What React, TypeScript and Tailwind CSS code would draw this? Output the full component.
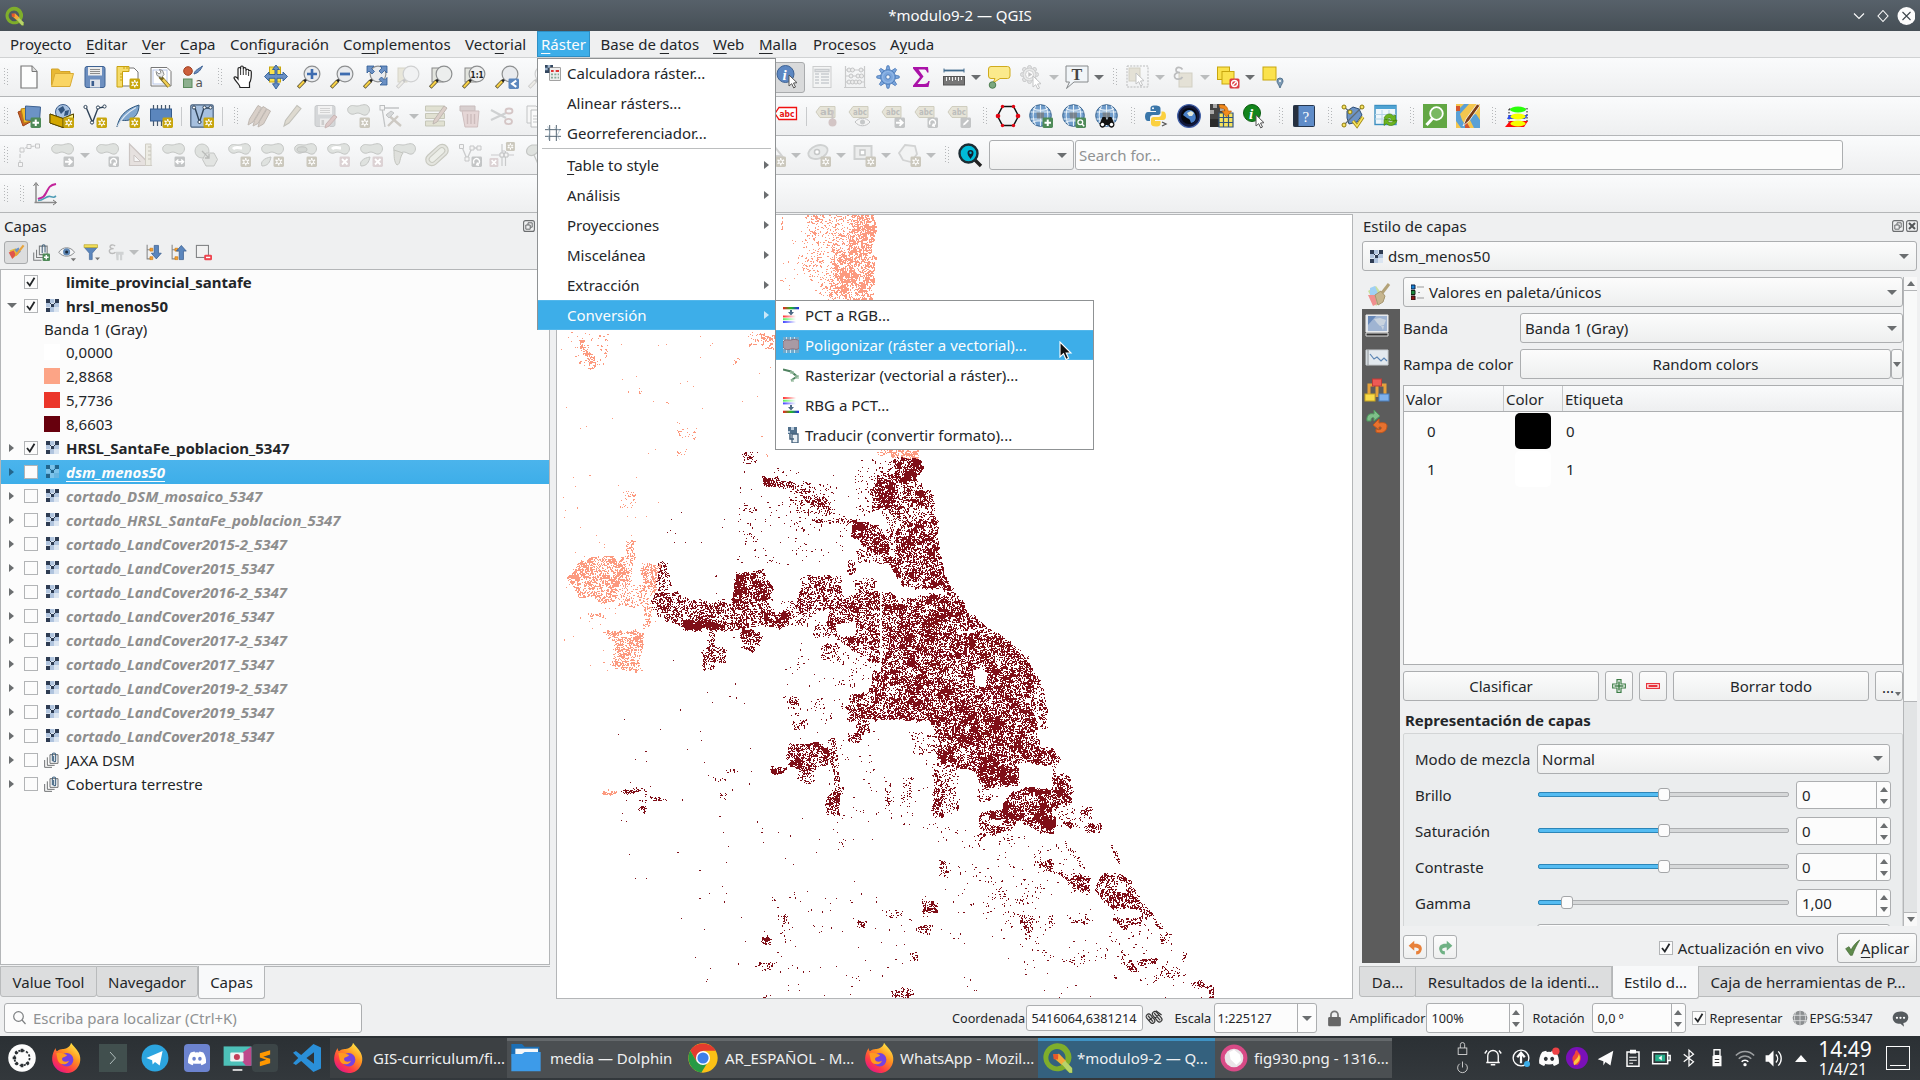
import React from "react";

type Kids = { children?: React.ReactNode };

/* ---------------------------------------------------------------- map raster */

type Pt = [number, number];
type Area = { c: "d" | "s" | "x"; k: number; p: Pt[] };

const hash = (x: number, y: number, s = 0) => {
  let h = (Math.imul(x, 374761393) + Math.imul(y, 668265263) + Math.imul(s, 974634777)) | 0;
  h = Math.imul(h ^ (h >>> 13), 1274126177);
  h ^= h >>> 16;
  return (h >>> 0) / 4294967296;
};

const smooth = (x: number, y: number, size: number, s: number) => {
  const gx = Math.floor(x / size);
  const gy = Math.floor(y / size);
  const fx = x / size - gx;
  const fy = y / size - gy;
  const a = hash(gx, gy, s) * (1 - fx) + hash(gx + 1, gy, s) * fx;
  const b = hash(gx, gy + 1, s) * (1 - fx) + hash(gx + 1, gy + 1, s) * fx;
  return a * (1 - fy) + b * fy;
};

const inside = (x: number, y: number, p: Pt[]) => {
  let r = false;
  for (let i = 0, j = p.length - 1; i < p.length; j = i++) {
    if (p[i][1] > y !== p[j][1] > y && x < ((p[j][0] - p[i][0]) * (y - p[i][1])) / (p[j][1] - p[i][1]) + p[i][0]) r = !r;
  }
  return r;
};

const tile = (ox: number, oy: number, sx: number, sy: number, rows: [Area["c"], number, number[]][]): Area[] =>
  rows.map(([c, k, n]) => {
    const q = n.length === 4 ? [n[0], n[1], n[2], n[1], n[2], n[3], n[0], n[3]] : n;
    const p: Pt[] = [];
    for (let i = 0; i < q.length; i += 2) p.push([ox + q[i] / sx, oy + q[i + 1] / sy]);
    return { c, k, p };
  });

const areas: Area[] = [
  ...tile(-17, -15, 2.8, 3, [
    ["s", 0.62, [870, 42, 938, 42, 932, 150, 930, 300, 845, 300, 825, 170, 870, 130]],
    ["s", 0.3, [830, 42, 870, 42, 870, 130, 825, 170, 845, 300, 800, 300, 815, 200]],
    ["s", 0.14, [740, 42, 830, 42, 820, 170, 810, 300, 800, 290, 750, 240, 720, 160]],
    ["s", 0.5, [755, 45, 795, 70]],
    ["s", 0.02, [662, 42, 760, 42, 830, 300, 662, 300]],
    ["s", 0.55, [610, 400, 658, 395, 658, 445, 615, 435]],
    ["s", 0.2, [580, 400, 610, 440]],
    ["s", 0.55, [108, 412, 130, 415, 160, 500, 140, 505, 115, 450]],
    ["s", 0.06, [90, 400, 190, 500]],
    ["s", 0.3, [540, 475, 555, 495]],
    ["s", 0.15, [380, 680, 440, 715]],
    ["s", 0.15, [380, 750, 412, 765]],
    ["s", 0.002, [60, 400, 650, 780]],
    ["s", 0.3, [268, 568, 285, 580]],
    ["s", 0.3, [350, 605, 358, 618]],
  ]),
  ...tile(-7, 225, 3, 3, [
    ["s", 0.7, [1012, 28, 1106, 30, 1106, 55, 1020, 52]],
    ["s", 0.35, [980, 30, 1012, 42]],
    ["s", 0.55, [50, 415, 80, 370, 130, 340, 190, 345, 200, 365, 230, 345, 232, 300, 260, 300, 250, 360, 235, 430, 200, 440, 190, 485, 150, 485, 100, 470, 60, 430]],
    ["s", 0.3, [190, 400, 325, 370, 315, 450, 295, 560, 270, 560, 280, 500, 200, 500]],
    ["s", 0.45, [275, 355, 325, 370, 310, 450, 270, 440]],
    ["s", 0.55, [155, 570, 180, 562, 240, 575, 285, 575, 285, 625, 265, 700, 165, 680, 195, 640, 175, 600]],
    ["s", 0.25, [112, 518, 160, 540]],
    ["s", 0.15, [212, 155, 256, 205]],
    ["s", 0.003, [30, 100, 320, 700]],
    ["x", 1, [245, 380, 270, 430]],
    ["x", 1, [215, 580, 240, 590]],
    ["d", 0.8, [1030, 55, 1108, 55, 1112, 120, 1040, 118]],
    ["d", 0.42, [970, 100, 1040, 100, 1115, 118, 1140, 190, 1120, 200, 1040, 200, 965, 215]],
    ["d", 0.6, [985, 120, 1030, 200]],
    ["d", 0.45, [1095, 150, 1150, 200]],
    ["d", 0.3, [1020, 200, 1155, 245]],
    ["d", 0.6, [1055, 240, 1158, 240, 1160, 330, 1185, 390, 1215, 462, 1060, 435, 1020, 370]],
    ["d", 0.2, [1000, 220, 1060, 330]],
    ["d", 0.08, [915, 60, 1030, 220]],
    ["d", 0.65, [635, 110, 685, 112, 680, 140, 645, 142]],
    ["d", 0.42, [680, 115, 740, 130, 760, 150, 820, 175, 850, 215, 830, 215, 740, 165, 680, 140]],
    ["d", 0.12, [740, 130, 850, 220]],
    ["d", 0.3, [780, 235, 930, 250]],
    ["d", 0.7, [905, 240, 960, 240, 1010, 290, 1015, 350, 960, 330, 935, 310, 910, 280]],
    ["d", 0.35, [920, 325, 1015, 365]],
    ["d", 0.65, [890, 362, 912, 400]],
    ["d", 0.2, [580, 190, 620, 212]],
    ["d", 0.25, [578, 35, 618, 72]],
    ["d", 0.012, [560, 90, 900, 380]],
    ["d", 0.4, [320, 365, 350, 365, 365, 450, 320, 450]],
    ["d", 0.52, [315, 455, 410, 465, 530, 490, 640, 470, 665, 512, 715, 520, 712, 555, 640, 560, 400, 570, 300, 515]],
    ["d", 0.6, [552, 398, 640, 395, 672, 440, 665, 490, 552, 485]],
    ["d", 0.85, [402, 541, 455, 570]],
    ["d", 0.6, [460, 546, 535, 568]],
    ["d", 0.6, [552, 402, 582, 460]],
    ["d", 0.6, [640, 515, 714, 556]],
    ["d", 0.65, [575, 560, 636, 590, 615, 630, 575, 630]],
    ["d", 0.5, [455, 625, 525, 622, 528, 665, 458, 668]],
    ["d", 0.45, [478, 572, 495, 625]],
    ["d", 0.3, [455, 668, 490, 690]],
    ["d", 0.45, [755, 415, 865, 410, 870, 490, 800, 510, 740, 530, 735, 490]],
    ["d", 0.25, [690, 485, 770, 555]],
    ["d", 0.58, [840, 500, 880, 480, 930, 450, 1000, 450, 1000, 670, 960, 660, 900, 620, 860, 600, 830, 540]],
    ["d", 0.4, [912, 415, 978, 450]],
    ["d", 0.3, [790, 535, 850, 590]],
    ["d", 0.35, [812, 610, 865, 660]],
    ["d", 0.55, [890, 760, 960, 755, 970, 690, 1005, 690, 1005, 842, 890, 842]],
    ["d", 0.64, [1000, 460, 1060, 470, 1215, 462, 1270, 530, 1310, 560, 1400, 620, 1440, 680, 1455, 750, 1455, 842, 1000, 842]],
    ["d", 0.3, [1400, 620, 1440, 680, 1480, 750, 1490, 842, 1470, 842, 1455, 740]],
    ["d", 0.02, [700, 640, 980, 840]],
    ["d", 0.25, [712, 768, 745, 795]],
    ["d", 0.3, [795, 770, 842, 780]],
    ["d", 0.002, [330, 200, 880, 840]],
    ["x", 1, [988, 425, 994, 670]],
    ["x", 1, [1270, 690, 1290, 685, 1312, 700, 1305, 740, 1275, 735]],
    ["x", 1, [855, 550, 915, 545, 915, 585, 860, 585]],
    ["x", 1, [1225, 575, 1310, 560, 1270, 575, 1215, 582]],
    ["x", 0.5, [1070, 680, 1110, 705]],
    ["x", 0.6, [1010, 735, 1045, 770]],
  ]),
  ...tile(-7, 485, 1.96, 3, [
    ["d", 0.66, [740, 60, 950, 60, 955, 110, 970, 150, 990, 175, 965, 195, 925, 195, 920, 250, 845, 262, 838, 215, 790, 200, 755, 175, 755, 80]],
    ["d", 0.4, [955, 20, 974, 20, 974, 85, 962, 88]],
    ["d", 0.55, [845, 225, 918, 225, 912, 256, 845, 260]],
    ["d", 0.4, [600, 60, 625, 100]],
    ["d", 0.5, [585, 100, 608, 130]],
    ["d", 0.2, [710, 90, 755, 170]],
    ["d", 0.62, [470, 125, 520, 125, 550, 150, 550, 180, 510, 205, 460, 205, 465, 160]],
    ["d", 0.6, [433, 200, 460, 220]],
    ["d", 0.35, [485, 190, 520, 245]],
    ["d", 0.4, [545, 115, 560, 115, 570, 270, 558, 300]],
    ["d", 0.65, [550, 265, 570, 270, 568, 348, 535, 345, 535, 315]],
    ["d", 0.3, [470, 0, 488, 18]],
    ["d", 0.25, [472, 55, 502, 90]],
    ["d", 0.45, [750, 190, 768, 190, 770, 355, 750, 345]],
    ["d", 0.25, [768, 190, 800, 200, 800, 330, 770, 340]],
    ["d", 0.3, [835, 262, 880, 290, 840, 310]],
    ["d", 0.6, [975, 190, 990, 215, 1018, 230, 1028, 310, 1000, 300, 985, 260]],
    ["d", 0.35, [960, 140, 985, 145, 995, 185, 980, 200]],
    ["d", 0.7, [878, 330, 895, 285, 925, 262, 1005, 268, 1028, 308, 985, 325, 985, 345, 995, 405, 970, 400, 935, 375, 915, 370, 880, 350]],
    ["d", 0.5, [838, 340, 878, 330, 915, 365, 900, 395, 845, 408]],
    ["x", 1, [862, 358, 885, 375]],
    ["x", 1, [845, 345, 860, 360]],
    ["d", 0.1, [990, 320, 1060, 380]],
    ["d", 0.5, [1038, 330, 1060, 350]],
    ["d", 0.5, [1050, 368, 1080, 398]],
    ["d", 0.6, [1010, 365, 1022, 380]],
    ["d", 0.3, [1092, 430, 1105, 432, 1118, 490, 1108, 490]],
    ["d", 0.25, [1000, 420, 1010, 420, 1055, 520, 1045, 520]],
    ["d", 0.55, [955, 480, 985, 478, 985, 515, 965, 510]],
    ["d", 0.5, [985, 510, 1005, 515, 1030, 550, 1018, 550]],
    ["d", 0.45, [1020, 525, 1055, 525, 1055, 580, 1030, 580]],
    ["d", 0.5, [1065, 575, 1085, 520, 1120, 515, 1150, 570, 1165, 605, 1180, 640, 1165, 655, 1150, 625, 1100, 622]],
    ["d", 0.5, [1090, 580, 1130, 578, 1160, 600, 1150, 622, 1100, 622]],
    ["x", 1, [1112, 545, 1128, 575]],
    ["d", 0.5, [1098, 655, 1165, 648, 1160, 665, 1120, 685]],
    ["d", 0.35, [1020, 655, 1065, 670]],
    ["d", 0.5, [1178, 640, 1205, 690, 1190, 688]],
    ["d", 0.3, [1195, 700, 1215, 730]],
    ["d", 0.7, [730, 603, 758, 640]],
    ["d", 0.45, [660, 630, 690, 650]],
    ["d", 0.45, [720, 673, 748, 703]],
    ["d", 0.3, [600, 660, 620, 682]],
    ["d", 0.6, [416, 710, 434, 730]],
    ["d", 0.25, [408, 785, 440, 810]],
    ["d", 0.3, [452, 645, 464, 700]],
    ["d", 0.5, [668, 868, 715, 862, 712, 885, 690, 896, 670, 896]],
    ["d", 0.3, [418, 884, 438, 896]],
    ["d", 0.35, [920, 640, 948, 645, 942, 720, 930, 715]],
    ["d", 0.25, [912, 592, 936, 612]],
    ["d", 0.45, [978, 645, 986, 675]],
    ["d", 0.6, [1120, 785, 1140, 780, 1155, 812, 1140, 815]],
    ["d", 0.65, [1150, 780, 1190, 770, 1185, 792, 1155, 792]],
    ["d", 0.3, [1118, 745, 1128, 790]],
    ["d", 0.25, [1195, 800, 1235, 838]],
    ["d", 0.35, [1240, 755, 1248, 785]],
    ["d", 0.5, [1255, 850, 1275, 838, 1290, 862, 1262, 862]],
    ["d", 0.45, [1285, 855, 1302, 855, 1305, 897, 1292, 897]],
    ["d", 0.55, [125, 272, 185, 262, 185, 275, 150, 282]],
    ["d", 0.6, [186, 288, 226, 291, 226, 300, 190, 298]],
    ["d", 0.3, [175, 300, 188, 338]],
    ["d", 0.4, [345, 203, 366, 218]],
    ["d", 0.35, [318, 234, 346, 239]],
    ["d", 0.35, [332, 280, 344, 296]],
    ["s", 0.75, [102, 272, 128, 285]],
    ["d", 0.35, [762, 480, 775, 525]],
    ["d", 0.35, [710, 755, 718, 780]],
    ["d", 0.12, [1000, 778, 1025, 788]],
    ["d", 0.2, [655, 240, 668, 320]],
    ["d", 0.12, [690, 225, 708, 320]],
    ["d", 0.012, [560, 100, 760, 100, 760, 380, 520, 470]],
    ["d", 0.012, [760, 380, 900, 400, 1000, 440, 1060, 580, 1180, 680, 1250, 840, 1200, 890, 820, 680, 740, 500]],
    ["d", 0.022, [840, 400, 930, 410, 1000, 600, 1000, 700, 880, 620]],
    ["d", 0.005, [410, 560, 820, 600, 1180, 780, 1290, 896, 420, 896]],
    ["d", 0.0012, [120, 40, 600, 100, 600, 860, 120, 860]],
  ]),
];

const MW = 795;
const MH = 784;

/* Pixels come in short horizontal or vertical runs rather than single dots. */
const grain = (x: number, y: number, n: number) =>
  hash(x, y, 7) < 0.5 ? hash(x >> 1, y, 40 + n) : hash(x, y >> 1, 340 + n);

const buildRaster = () => {
  const grid = new Uint8Array(MW * MH);
  areas.forEach((a, n) => {
    const xs = a.p.map((q) => q[0]);
    const ys = a.p.map((q) => q[1]);
    const x0 = Math.max(0, Math.floor(Math.min(...xs)) - 6);
    const x1 = Math.min(MW - 1, Math.ceil(Math.max(...xs)) + 6);
    const y0 = Math.max(0, Math.floor(Math.min(...ys)) - 6);
    const y1 = Math.min(MH - 1, Math.ceil(Math.max(...ys)) + 6);
    const small = Math.min(x1 - x0, y1 - y0) < 30;
    for (let y = y0; y <= y1; y++)
      for (let x = x0; x <= x1; x++) {
        const w1 = a.c === "x" ? 1.5 : 4;
        const w2 = a.c === "x" || small ? 0 : 7;
        const jx = (smooth(x, y, 3, 5) - 0.5) * w1 + (smooth(x, y, 11, 15) - 0.5) * w2;
        const jy = (smooth(x, y, 3, 6) - 0.5) * w1 + (smooth(x, y, 11, 16) - 0.5) * w2;
        if (!inside(x + jx, y + jy, a.p)) continue;
        if (a.c === "x") {
          if (hash(x, y, 90 + n) < a.k) grid[y * MW + x] = 0;
          continue;
        }
        const m =
          a.k < 0.05
            ? (smooth(x, y, 13, 13) > 0.6 ? 2.4 : 0.35) * (smooth(x, y, 3, 14) > 0.55 ? 2 : 0.4)
            : 0.1 + 0.8 * smooth(x, y, 3, 11) + 0.9 * smooth(x, y, 8, 12);
        if (grain(x, y, n) < a.k * m) grid[y * MW + x] = a.c === "d" ? 2 : 1;
      }
  });
  const out = ["", "", ""];
  for (let y = 0; y < MH; y++)
    for (let x = 0; x < MW; ) {
      const v = grid[y * MW + x];
      let e = x + 1;
      while (e < MW && grid[y * MW + e] === v) e++;
      if (v) out[v] += `M${x} ${y}h${e - x}v1h${x - e}z`;
      x = e;
    }
  return out;
};

const raster = buildRaster();

const MapCanvas = () => (
  <svg width={MW} height={MH} viewBox={`0 0 ${MW} ${MH}`} shapeRendering="crispEdges" className="block">
    <path d={raster[1]} fill="#fc9a7f" />
    <path d={raster[2]} fill="#7f0f18" />
  </svg>
);

/* --------------------------------------------------------------------- icons */

const Svg = ({ s = 24, children }: Kids & { s?: number }) => (
  <svg width={s} height={s} viewBox="0 0 24 24" fill="none" className="block shrink-0 overflow-visible">
    {children}
  </svg>
);

const Badge = ({ t = "star", off = false }: { t?: string; off?: boolean }) => {
  const fill = off ? (t === "star" ? "#cbc8bd" : t === "x" ? "#dcd2d4" : "#c3c5c6") : t === "plus" || t === "zoom" ? "#4e8a58" : t === "back" ? "#5b86bd" : "#c8a60e";
  return (
    <g>
      <rect x="13.5" y="13.5" width="10.5" height="10.5" rx="1.4" fill={fill} />
      {t === "star" && <path d="M18.75 15v7.5M15.5 16.9l6.5 3.8M22 16.9l-6.5 3.8" stroke="#fff" strokeWidth="1.3" />}
      {t === "star" && <circle cx="18.75" cy="18.75" r="1.9" stroke="#fff" strokeWidth="1" fill={fill} />}
      {t === "plus" && <path d="M18.75 15.5v6.5M15.5 18.75H22" stroke="#fff" strokeWidth="2" />}
      {t === "arrow" && <path d="M15 18.75h6M18.5 15.6l3.2 3.15-3.2 3.15" stroke="#fff" strokeWidth="1.9" />}
      {t === "both" && <path d="M15.2 18.75h7M17.4 16.4l-2.4 2.35 2.4 2.35M20.2 16.4l2.4 2.35-2.4 2.35" stroke="#fff" strokeWidth="1.4" />}
      {t === "x" && <path d="M16 16l5.5 5.5M21.5 16L16 21.5" stroke="#fff" strokeWidth="1.8" />}
      {t === "rot" && <path d="M16.2 20.5a3 3 0 1 1 3 1M19.6 19.4l-1 2.4 2.4.6" stroke="#fff" strokeWidth="1.4" />}
      {t === "pen" && <path d="M16 21.5l.6-2 4.2-4 1.2 1.3-4 4z" fill="#fff" />}
      {t === "back" && <path d="M21.3 15.6l-4.3 3.15 4.3 3.15" stroke="#fff" strokeWidth="2" />}
      {t === "zoom" && <path d="M20 20l2.2 2.2" stroke="#fff" strokeWidth="1.5" />}
      {t === "zoom" && <circle cx="18.3" cy="18.2" r="2.4" stroke="#fff" strokeWidth="1.3" />}
    </g>
  );
};

const Glass = ({ c = "#e9ebee", off = false }: { c?: string; off?: boolean }) => (
  <g>
    <path d="M1.2 22.6l6.6-6.9" stroke={off ? "#c9c9c9" : "#5b5334"} strokeWidth="3.6" />
    <path d="M1.8 22l5.4-5.7" stroke={off ? "#ecebe6" : "#f8d247"} strokeWidth="2.1" />
    <path d="M7.3 16.4l2.4-2.6" stroke={off ? "#c5c5c5" : "#222"} strokeWidth="2.6" />
    <circle cx="15" cy="9" r="7.9" fill={c} stroke={off ? "#cfd0d1" : "#8d8f90"} strokeWidth="1.2" />
  </g>
);

const blob = "M2 4c3-4 6-2 9-2s8-3 11 0 1 8-2 9-5-2-8-2-4 2-7 1-4-4-3-6z";
const Blob = ({ b, x }: { b?: string; x?: React.ReactNode }) => (
  <Svg>
    <path d={blob} fill="#dfe2df" stroke="#c4c6c4" strokeWidth="1" />
    {x}
    {b && <Badge t={b} off />}
  </Svg>
);

const Tag = ({ b, x, txt = "abc" }: { b?: string; x?: React.ReactNode; txt?: string }) => (
  <Svg>
    <path d="M1 8l4-5.500h15v11H5z" fill="#e6e4d8" stroke="#cfcdbf" />
    <text x="5" y="11.2" fontSize="9" fontFamily="DejaVu Sans" fontWeight="700" fill="#bcbdbc" textLength="14" lengthAdjust="spacingAndGlyphs">
      {txt}
    </text>
    {x}
    {b && <Badge t={b} off />}
  </Svg>
);

const Globe = ({ children }: Kids) => (
  <Svg>
    <circle cx="11.5" cy="11.5" r="10.8" fill="#6f9ccb" stroke="#39648f" />
    <path d="M1.5 8h20M1.5 15h20M3.5 18.5C6 16 17 16 19.5 18.5M4 4.5c3 2.3 12 2.3 15 0M11.5 1v21M6.5 2c-3 6-3 13 0 19M16.5 2c3 6 3 13 0 19" stroke="#e6f0f8" strokeWidth="1.1" />
    <path d="M7.5 8.5H15v6H8z" fill="#777c80" opacity=".8" />
    {children}
  </Svg>
);

const Floppy = ({ off = false }: { off?: boolean }) => (
  <g>
    <rect x="2" y="1.5" width="20" height="21" rx="2" fill={off ? "#d2d4d6" : "#6d8fc0"} stroke={off ? "#c3c5c7" : "#3e6293"} />
    <rect x="5" y="2" width="14" height="8.5" fill={off ? "#f2f2f2" : "#ececec"} />
    <path d="M7 4.5h10M7 6.5h10M7 8.5h10" stroke={off ? "#d0d0d0" : "#8d8d8d"} />
    <rect x="7" y="14.5" width="10" height="8" fill={off ? "#ececec" : "#dfe3ea"} />
    <rect x="8.5" y="16" width="2.6" height="5" fill={off ? "#c9c9c9" : "#3c5e8e"} />
  </g>
);

const Firefox = ({ s = 32 }: { s?: number }) => (
  <Svg s={s}>
    <defs>
      <linearGradient id="ffx" x1="20" y1="2" x2="5" y2="22" gradientUnits="userSpaceOnUse">
        <stop stopColor="#fff04a" />
        <stop offset=".4" stopColor="#ff9320" />
        <stop offset=".75" stopColor="#ff3b45" />
        <stop offset="1" stopColor="#e3168a" />
      </linearGradient>
    </defs>
    <path d="M15 .5c1.5 2.5 4 4 5.800 7.500 2.5 5 .8 10.5-3 13.300C13 24.800 6.500 23.500 3 19-.3 14.500.5 9 3.500 4.500c0 1.500.5 2 1 2.500C6 5.500 8 5 9.500 5.200c2-.3 5-1.500 5.500-4.700z" fill="url(#ffx)" />
    <circle cx="11.8" cy="13.3" r="5" fill="#7542e0" />
    <path d="M4 8.500c3-1 5.500.3 8 1.200-.5 1.600-3.200 1.300-3.700 2.800-.3 2 2.700 3 5.200 1.500-1.500 4-7.500 3.500-8.500-.5z" fill="#ff9a1f" />
  </Svg>
);

const QLogo = ({ s = 24 }: { s?: number }) => (
  <Svg s={s}>
    <path d="M12 1a10.500 10.500 0 1 0 6 19.300l3.500 3h2v-3.500l-2.500-2.500A10.500 10.500 0 0 0 12 1zm0 4.300a6.500 6.500 0 0 1 6 8.700l-4-3.700-3 3 4.500 4A6.500 6.500 0 1 1 12 5.300z" fill="#7fae2b" />
    <path d="M9.500 9.500l4-.6 5.500 5.600-3 3-5.600-5z" fill="#f4a83a" />
    <path d="M9 9l4 .2-.3 4L9.500 13z" fill="#e8572a" />
    <path d="M15.500 16.500l2.500-2.500 5.300 5.500v3.500h-2z" fill="#b9d36a" />
  </Svg>
);

const RasterIcon = ({ dim = false }: { dim?: boolean }) => (
  <svg width="13" height="13" viewBox="0 0 13 13" shapeRendering="crispEdges" className="block shrink-0">
    <rect width="13" height="13" fill={dim ? "#66b4e0" : "#dbe5f1"} />
    <path d="M4 0h4v4H4zM0 4h4v4H0zM4 8h4v5H4zM8 4h5v4H8z" fill={dim ? "#7cc3ea" : "#b0c4de"} />
    <path d="M0 0h4v4H0zM9 0h4v4H9zM5 5h3v3H5zM0 9h4v4H0zM8 4h1v1H8zM4 4h1v1H4z" fill={dim ? "#23658c" : "#2e3c53"} />
  </svg>
);

const GroupIcon = () => (
  <Svg s={16}>
    <path d="M9 4h12v13H9zM5 8v12h11M1 12v11h11" stroke="#6e7072" strokeWidth="1.5" />
    <path d="M12.5 14V4a2.500 2.500 0 0 1 5 0v9a1.500 1.500 0 0 1-3 0V6" stroke="#3b5f7d" strokeWidth="1.6" />
  </Svg>
);

const arrowCursor = (x: number, y: number, off = false) => (
  <path d={`M${x} ${y}v11l2.700-2.300 2 4.200 1.800-.9-2-4 3.500-.3z`} fill="#fff" stroke={off ? "#c3c4c5" : "#555"} strokeWidth="1" />
);

const Node = ({ pts, c }: { pts: Pt[]; c: string }) => (
  <g>
    {pts.map(([x, y], i) => (
      <circle key={i} cx={x} cy={y} r="1.6" fill="#fff" stroke={c} strokeWidth="1" />
    ))}
  </g>
);

const icons: Record<string, React.ReactNode> = {
  doc: <Svg><path d="M4 1h11l5 5.500V23H4z" fill="#fdfdfd" stroke="#777" strokeWidth="1.2" /><path d="M15 1v5.500h5" fill="#ddd" stroke="#777" /></Svg>,
  folder: <Svg><path d="M1.500 20V4h7l2 2.500h9.500V9" fill="#e9b935" stroke="#d2a32a" /><path d="M1.500 21.500L5 8.500h18.500L20 21.500z" fill="#fad564" stroke="#d9ab35" /></Svg>,
  save: <Svg><Floppy /></Svg>,
  layout: <Svg><path d="M3 3h15l4 4v14H3z" fill="#fff" stroke="#777" /><path d="M1 1.500h12v5H6.500V22H1z" fill="#f6dc6a" stroke="#c8a10f" /><path d="M4 9h2M4 12h2M4 15h2M8 2v2M11 2v2" stroke="#c8a10f" /><Badge /></Svg>,
  layoutmgr: <Svg><path d="M2 2.500h16l4 4V21H2z" fill="#fff" stroke="#777" /><rect x="4" y="5" width="14" height="14" stroke="#b9c8ea" /><path d="M11 11.500l9 10" stroke="#7a6a22" strokeWidth="4" /><path d="M14 14.500l6 7" stroke="#f2cf57" strokeWidth="2.5" /><path d="M7 6.500l1 4 4.500 2 2.500-3-1.500-4-3-1 1.500 3-2 1.500z" fill="#e9eaea" stroke="#8b8d8e" /></Svg>,
  style: <Svg><circle cx="6" cy="6" r="4.3" fill="#cc5f3c" stroke="#a03f20" /><path d="M12 9c1-4 3-4 8.500-8-2 4-3.500 6.500-8.500 8z" fill="#6d8fc0" stroke="#3e6293" /><rect x="1.5" y="14" width="8.5" height="8.5" fill="#8db08f" stroke="#5b8a5d" /><text x="13.5" y="22" fontSize="12" fontFamily="DejaVu Sans" fill="#555">a</text></Svg>,
  hand: <Svg><path d="M8 22.500c0-3-4.500-6-6-9.500 0-2 2.500-1.500 4 .8V4c0-2 2.600-2 2.600 0V2.500c0-2 2.700-2 2.700 0V4c0-2 2.700-1.800 2.700 0v1.500c.2-1.800 2.800-1.600 2.800.3 1-.8 2.500-.3 2.500 1.200 0 5 .3 8-1.800 10.500v5z" fill="#fff" stroke="#222" strokeWidth="1.2" transform="translate(1)" /><path d="M9.600 4v6M12.300 4v6M15 5v5M17.600 7v4" stroke="#333" /></Svg>,
  pan: <Svg><rect x="5.5" y="2" width="11" height="15" fill="#fbe24d" stroke="#c8a60e" /><path d="M12 0l3.500 4.500H13v5h6V7l4.500 4.500L19 16v-2.700h-6v5.500h2.500L12 24l-3.500-5.200H11v-5.500H5V16L.5 11.500 5 7v2.500h6v-5H8.500z" fill="#6a90c4" stroke="#2f5c96" strokeWidth=".9" /></Svg>,
  zin: <Svg><Glass /><path d="M15 4v10M10 9h10" stroke="#3d6cb0" strokeWidth="2.6" /></Svg>,
  zout: <Svg><Glass /><path d="M10 9h10" stroke="#3d6cb0" strokeWidth="2.8" /></Svg>,
  zfull: <Svg><Glass /><path d="M4 1h7L8.500 3.500l3 3-2.500 2.500-3-3L4 8zM24 1v7l-2.500-2.500-3 3L16 6l3-3-2-2zM24 20h-7l2.500-2.500-3.500-3 2.500-2.500 3 3 2.500-2.500z" fill="#6a90c4" stroke="#2f5c96" strokeWidth=".8" /></Svg>,
  zsel: <Svg><rect x="2" y="3" width="9" height="14" fill="#e8e6da" stroke="#d5d3c8" /><Glass off c="#f1f2f3" /></Svg>,
  zlayer: <Svg><rect x="3" y="3" width="11" height="14" fill="#e2e4de" stroke="#888" /><Glass c="#eceeed" /></Svg>,
  z11: <Svg><rect x="3" y="3" width="11" height="14" fill="#e2e4de" stroke="#888" /><Glass c="#eeefef" /><text x="8.6" y="12.5" fontSize="9.5" fontFamily="DejaVu Sans" fontWeight="700" fill="#222" textLength="13" lengthAdjust="spacingAndGlyphs">1:1</text></Svg>,
  zlast: <Svg><Glass /><Badge t="back" /></Svg>,
  znext: <Svg><Glass off c="#f4f5f6" /></Svg>,
  ident: <Svg><circle cx="8.5" cy="9" r="8.5" fill="#5c87c2" stroke="#3e6293" /><text x="5.5" y="14.5" fontSize="15" fontStyle="italic" fontWeight="700" fontFamily="Liberation Serif" fill="#fff">i</text>{arrowCursor(12, 10)}</Svg>,
  table: <Svg><rect x="3" y="1.5" width="18" height="21" fill="#f3f4f4" stroke="#cccdce" /><path d="M5 4.500h14v2H5zM5 9h4M11 9h8M5 12h4M11 12h8M5 15h4M11 15h8M5 18h4M11 18h8" stroke="#c9cccf" strokeWidth="1.3" /></Svg>,
  abacus: <Svg><path d="M2.500 1v21M21.500 1v21M2.500 5h19M2.500 11h19M2.500 17h19M1 22.500h22" stroke="#c9cacb" strokeWidth="1.2" />{[[6, 5], [9.5, 5], [18, 5], [8, 11], [15, 11], [18.5, 11], [6, 17], [9.5, 17], [13, 17], [16.5, 17]].map(([x, y], i) => <circle key={i} cx={x} cy={y} r="2" fill="#ededed" stroke="#c4c5c6" />)}</Svg>,
  gear: <Svg>{[0, 45, 90, 135, 180, 225, 270, 315].map((a) => <path key={a} d="M10 5.500L11 .8h2l1 4.700z" fill="#7ba6dd" stroke="#4b7ab8" strokeWidth=".8" transform={`rotate(${a} 12 12)`} />)}<circle cx="12" cy="12" r="7.3" fill="#7ba6dd" stroke="#4b7ab8" strokeWidth=".9" /><circle cx="12" cy="12" r="5.5" stroke="#93b8e6" strokeWidth="1.2" /><circle cx="12" cy="12" r="2.2" fill="#f4f6f8" stroke="#4b7ab8" /></Svg>,
  sigma: <Svg><path d="M4 2h15l.6 5.500h-1.500C17.500 5 16.500 4.500 14 4.500H9.500l5 7-6 7.500h6.500c2.500 0 3.500-.8 4.300-3h1.400L19.500 22H4v-1.500l7-8.500-7-8.500z" fill="#aa12a8" /></Svg>,
  measure: <Svg><path d="M2 5.500h20" stroke="#406a8c" strokeWidth="1.8" /><path d="M2 3.500v4M22 3.500v4" stroke="#406a8c" /><rect x="1.5" y="11.5" width="21" height="8.5" fill="#777" stroke="#555" /><path d="M4.500 12v4M7.500 12v3M10.500 12v4M13.500 12v3M16.500 12v4M19.500 12v3" stroke="#f2f2f2" /></Svg>,
  tip: <Svg><path d="M4 1.500h16.500a2.500 2.500 0 0 1 2.500 2.500v7a2.500 2.500 0 0 1-2.500 2.500H13L6 18l2-4.500H4A2.500 2.500 0 0 1 1.500 11V4A2.500 2.500 0 0 1 4 1.500z" fill="#fbea8c" stroke="#d0ab1d" /><circle cx="5.5" cy="20" r="3.3" fill="#7ca77e" stroke="#4f7f52" /></Svg>,
  action: <Svg>{[0, 45, 90, 135, 180, 225, 270, 315].map((a) => <circle key={a} cx="9.5" cy="2.5" r="2" fill="#e4e5e5" stroke="#cbcccd" transform={`rotate(${a} 9.5 9.5)`} />)}<circle cx="9.5" cy="9.5" r="6.5" fill="#e8e9e9" stroke="#cdcecf" /><circle cx="9.5" cy="9.5" r="4" fill="#fafafa" stroke="#cdcecf" /><path d="M8.300 7l4 2.500-4 2.500z" fill="#c2c3c4" />{arrowCursor(13, 11, true)}</Svg>,
  text: <Svg><path d="M1 1h22v16H9l-7.500 6.500L4.500 17H1z" fill="#f1f5f8" stroke="#86898b" /><text x="6.5" y="14.5" fontSize="16" fontWeight="700" fontFamily="Liberation Serif" fill="#444">T</text></Svg>,
  sel: <Svg><rect x="1" y="1" width="21" height="21" stroke="#b9babb" strokeDasharray="2 1.2" /><rect x="3" y="3" width="11" height="13" fill="#e4e1d6" stroke="#d2cfc3" />{arrowCursor(10, 8, true)}</Svg>,
  selex: <Svg><rect x="8" y="8" width="13" height="14" fill="#e4e1d6" stroke="#d2cfc3" /><path d="M11.500 4.500C10 1.500 5 1.500 5 5c0 2 2 2.500 4 2.500C5.500 7.500 3 9 3.500 11.500 4 15 10 15 11.500 12" stroke="#bcbdbe" strokeWidth="1.7" /></Svg>,
  desel: <Svg><rect x="1.5" y="2" width="12" height="12.5" fill="#fbe24d" stroke="#c8a60e" /><rect x="6" y="6.5" width="12" height="12.5" fill="#fbe24d" stroke="#c8a60e" /><rect x="13.5" y="13.5" width="10" height="10" rx="1.5" fill="#dc3b41" /><circle cx="18.5" cy="18.5" r="3" stroke="#fff" strokeWidth="1.3" /><path d="M20.500 16.500l-4 4" stroke="#fff" strokeWidth="1.3" /></Svg>,
  selloc: <Svg><rect x="2" y="2" width="13" height="13" fill="#fbe24d" stroke="#c8a60e" /><path d="M19 23c-1.500-4-3-5-3-7a3 3 0 0 1 6 0c0 2-1.500 3-3 7z" fill="#7d9bb5" stroke="#55748f" /><circle cx="19" cy="16" r="1" fill="#fff" /></Svg>,
  addlayer: <Svg><path d="M1 8l10-4 4 13-9 5z" fill="#c8622a" stroke="#9c4213" /><path d="M4 5l11-2 2 13-10 3z" fill="#f2b92c" stroke="#b78410" /><path d="M8.500 2l15 1-1 14-14-1z" fill="#6c93c6" stroke="#3e6293" /><Badge t="plus" /></Svg>,
  geopkg: <Svg><circle cx="13" cy="8" r="7.5" fill="#a9c3e2" stroke="#3e5f8c" /><path d="M8 5l5-3 2 4-4 4zM15 7l4-1-1 5-4 1z" fill="#32557f" /><path d="M0 10l13 4.500L23.500 10v9L13 23.500 0 19z" fill="#f3d400" stroke="#5b4a00" /><path d="M13 14.500L23.500 10v9L13 23.500z" fill="#fff58a" stroke="#5b4a00" /><path d="M0 10l13 4.500v9L0 19z" fill="#d3a700" stroke="#5b4a00" /><Badge /></Svg>,
  shp: <Svg><path d="M3 3l6.500 15.500L15 4l6-1" stroke="#2f4358" strokeWidth="1.4" /><Node pts={[[2.5, 3], [9, 18.5], [15, 3.5], [21.5, 2.5]]} c="#2f4358" /><Badge /></Svg>,
  feather: <Svg><path d="M1 23C3 14 7 6 23 1c0 7-3 13-10 15-3 .8-6 .5-8 0z" fill="#7fa6cf" stroke="#32597f" /><path d="M1.500 22.500C6 13 12 8 20 3.500" stroke="#dfe9f3" strokeWidth="1.2" /><Badge /></Svg>,
  chip: <Svg><path d="M4.500 1v21M8.500 1v21M12.500 1v21M16.500 1v21M20.500 1v21" stroke="#45586c" strokeWidth="1.2" /><rect x="1.5" y="5" width="21" height="12" fill="#5b86bd" stroke="#365d8e" /><Badge /></Svg>,
  virt: <Svg><rect x=".8" y=".8" width="22.4" height="22.4" rx="1.5" fill="#a6c0df" stroke="#49627f" strokeWidth="1.2" /><path d="M5 4l4.500 14L14 4l7 0" stroke="#2f4358" strokeWidth="1.4" /><Node pts={[[4, 3.5], [9.5, 18], [14.5, 3.5], [20.5, 3.5]]} c="#2f4358" /><Badge /></Svg>,
  pencils: <Svg><path d="M1 21l1.500-6L11 1.500l3.500 2L6 18zM6 22l1.500-5.500L16 2.500l3.500 2L11 19.500zM11 23l1.500-5.500L20 5l3.500 2-7 13z" fill="#d8cfc8" stroke="#bfb8b2" /></Svg>,
  pencil: <Svg><path d="M4 22l1.500-5.500L17 1.500l4 3L9 19z" fill="#dedad0" stroke="#c2c1ba" strokeWidth="1.1" /></Svg>,
  saveedit: <Svg><g opacity=".9"><Floppy off /></g><path d="M12 24l1-4 8-9 3 2-8 9z" fill="#ddc9c8" stroke="#c9b6b5" /></Svg>,
  addpoly: <Blob b="star" />,
  vertex: <Svg><path d="M3 4h17M3 4l3 19" stroke="#c2c4c5" strokeWidth="1.3" /><rect x="1" y="1.5" width="4.5" height="4.5" fill="#f5f5f5" stroke="#bcbebf" /><path d="M9 22l10-10M8 10l14 12" stroke="#cdc9c3" strokeWidth="2.4" /><path d="M7 11l5-4 3 2-5 5z" fill="#d6d8d9" stroke="#c2c4c5" /></Svg>,
  multi: <Svg><path d="M1.500 2h19v5h-19zM1.500 9.500h19v5h-19zM1.500 17h19v5h-19z" fill="#e1e1d2" stroke="#c6c7b9" /><path d="M9 20l1-4L20 2l3 2-10 14z" fill="#dccfc9" stroke="#bfb7b1" /></Svg>,
  trash: <Svg><path d="M3 2h15v5H3z" fill="#d8cfcf" stroke="#c7bcbc" /><path d="M5 7h17l-1.500 16H8z" fill="#e5d6d6" stroke="#cfbfbf" /><path d="M10.500 10v10M14 10v10M17.500 10v10" stroke="#cdbcbc" strokeWidth="1.4" /></Svg>,
  cut: <Svg><path d="M1 6l15 8M1 16l15-7" stroke="#cfd1d2" strokeWidth="2.2" /><ellipse cx="19" cy="7" rx="3.5" ry="2.5" stroke="#d5c6c6" strokeWidth="1.8" /><ellipse cx="18.5" cy="17.5" rx="3.5" ry="2.6" stroke="#d5c6c6" strokeWidth="1.8" /></Svg>,
  copy: <Svg><path d="M4 2h9l4 4v13H4z" fill="#f7f7f7" stroke="#c2c4c5" /><path d="M8 6h8l4 4v13H8z" fill="#fbfbfb" stroke="#bcbebf" /><path d="M10 12h7M10 15h7M10 18h7" stroke="#c5c7c8" /></Svg>,
  redabc: <Svg><path d="M1 9.500l4-6h17.500v12H5z" fill="#fff" stroke="#f01010" strokeWidth="1.3" /><text x="5.5" y="13" fontSize="9.5" fontFamily="DejaVu Sans" fontWeight="700" fill="#e81414" textLength="15" lengthAdjust="spacingAndGlyphs">abc</text></Svg>,
  tagpin: <Tag txt="ab" x={<g><path d="M17.500 6v11" stroke="#cbc5c5" strokeWidth="2" /><circle cx="17.5" cy="18.5" r="4" fill="#d3c5c5" /></g>} />,
  tageye: <Tag x={<g><path d="M7 18c4-5 11-5 15 0-4 5-11 5-15 0z" fill="#f4f4f4" stroke="#c0c1c2" /><circle cx="14.5" cy="18" r="2.5" fill="#c6c8c9" /></g>} />,
  tagmove: <Tag b="arrow" />,
  tagrot: <Tag b="rot" />,
  tagpen: <Tag b="pen" />,
  hex: <Svg><path d="M6.500 2.500h11L22.500 12l-5 9.500h-11L1.500 12z" stroke="#111" strokeWidth="1.5" /><g fill="#e30613"><circle cx="6.5" cy="2.5" r="1.7" /><circle cx="17.5" cy="2.5" r="1.7" /><circle cx="6.5" cy="21.5" r="1.7" /><circle cx="17.5" cy="21.5" r="1.7" /><circle cx="2" cy="12" r="2.3" /><circle cx="22" cy="12" r="2.3" /></g></Svg>,
  globeplus: <Globe><Badge t="plus" /></Globe>,
  globezoom: <Globe><Badge t="zoom" /></Globe>,
  binoc: <Globe><path d="M5 19l2.500-6h3l1 2.500h1l1-2.500h3l2.500 6a3 3 0 1 1-5.500 2h-3a3 3 0 1 1-5.500-2z" fill="#111" /><circle cx="7.5" cy="20.5" r="1.7" fill="#fff" /><circle cx="16.5" cy="20.5" r="1.7" fill="#fff" /></Globe>,
  python: <Svg><path d="M11 1.500c-4 0-4.500 1.500-4.500 3V7H12v1H4c-2 0-3 2-3 4.500S2 17 4 17h2v-3c0-2 1.500-3 3-3h5c1.500 0 2.500-1 2.500-2.500v-4c0-2-1.500-3-5.500-3z" fill="#3a76a9" /><path d="M12 22.500c4 0 4.500-1.500 4.500-3V17H11v-1h8c2 0 3-1.500 3-4s-1-4.500-3-4.500h-1.500V10c0 2-1.500 3-3 3h-5C8 13 7 14 7 15.500v4c0 2 1.500 3 5 3z" fill="#fbd03f" /><circle cx="9" cy="4.3" r="1" fill="#fff" /><path d="M18 18l4 2-4 2" stroke="#555" strokeWidth="1.3" /></Svg>,
  earth: <Svg><circle cx="12" cy="12" r="11.3" fill="#10183c" stroke="#3f5ea6" strokeWidth="1.3" /><circle cx="12" cy="12" r="8" fill="#06080f" /><path d="M6 11c3-7 10-6 12-1s0 8-4 9c-1-3-1-4-4-5z" fill="#4a80c8" /><path d="M10 9l4-2 3 2-2 3-3 0z" fill="#e3e8d8" /></Svg>,
  rast: <Svg><path d="M0 0h15v15H0z" fill="#444" /><path d="M3 0h4v4H3zM10 3h4v4h-4zM0 6h4v4H0z" fill="#aaa" /><path d="M0 15h11v8H0z" fill="#2b2b2b" /><path d="M9 9h14v14H9z" fill="#f6e25d" /><path d="M9 9h14v14H9zM13.500 9v14M18.500 9v14M9 13.500h14M9 18.500h14" stroke="#33557d" strokeWidth="1.2" /><path d="M9 1c6-1 9 2 9 6h3.500L16.500 13 12 7h3c0-2-2-3-5-3z" fill="#f08a1d" stroke="#c0620b" strokeWidth=".7" /></Svg>,
  info: <Svg><circle cx="9" cy="9" r="8.5" fill="#12851c" stroke="#0b5d12" /><text x="6" y="14.5" fontSize="15" fontStyle="italic" fontWeight="700" fontFamily="Liberation Serif" fill="#fff">i</text>{arrowCursor(13, 11)}</Svg>,
  book: <Svg><rect x="1.5" y="1.5" width="21" height="21" rx="1" fill="#5f8cc8" stroke="#26364d" /><rect x="1.5" y="1.5" width="5" height="21" fill="#27303f" /><text x="10.5" y="17.5" fontSize="15" fontFamily="Liberation Serif" fill="#fff">?</text></Svg>,
  topo: <Svg><path d="M6 7l6-4 6 2 3 6-5 7-8 2-2-6z" fill="#6c93c6" stroke="#2f4f77" /><path d="M3 21L21 3M3 3l6 5" stroke="#5f6a72" strokeWidth="1.2" /><g fill="#f7e463" stroke="#8e7a0d"><circle cx="3" cy="3" r="2" /><circle cx="21" cy="3" r="2" /><circle cx="9" cy="8" r="2" /><circle cx="3" cy="21" r="2" /></g><path d="M12 17l4 5 6-9" stroke="#a58d12" strokeWidth="3.2" /><path d="M12 17l4 5 6-9" stroke="#f7e463" strokeWidth="1.5" /></Svg>,
  reload: <Svg><rect x="1" y="1.5" width="21" height="19" fill="#eef6fb" stroke="#3c8fc0" strokeWidth="1.4" /><path d="M1 2h21v3H1z" fill="#4fa3d3" /><path d="M1 10.500h21M1 15h21M8 6v14M15 6v14" stroke="#b4d3e6" /><path d="M10 14c2-5 8-5 9-2l2.500-1v6h-6l2-2c-1.500-2-4-1-5 1zM23 16c-1 6-8 7-10.500 3.500L10 21.500v-6h6l-2 2c2 2 5 1 5.500-1z" fill="#6cb51f" stroke="#3e7c08" strokeWidth=".6" /></Svg>,
  green: <Svg><rect width="24" height="24" fill="#62a744" /><circle cx="13.5" cy="9.5" r="6.3" fill="#79b862" stroke="#fff" strokeWidth="1.8" /><path d="M9.500 14.500L3.500 21" stroke="#fff" strokeWidth="3" /></Svg>,
  osm: <Svg><rect width="24" height="24" fill="#f4c64e" /><path d="M0 8l8-8h5L4 10l2 6 5 8H5L0 17z" fill="#5aa0d6" /><path d="M12 12l8-2 4 6v8h-6z" fill="#5aa0d6" /><path d="M0 2h4v5H0zM9 15l5 9H9z" fill="#d5562f" /><path d="M7 22l3-7L21 0l3 1.500L13 17z" fill="#7c3d18" stroke="#fff" strokeWidth=".8" /></Svg>,
  stack: <Svg><path d="M4 5h18M4 5v14M22 4v15" stroke="#111" strokeDasharray="1.5 1.5" /><path d="M5 17h18l-4 6H0z" fill="#fe0a0a" /><ellipse cx="13" cy="19.5" rx="7.5" ry="3" fill="#f6ff00" /><path d="M4 11h19l-3 4H2z" fill="#2a49f0" /><ellipse cx="13" cy="12.5" rx="7.5" ry="3" fill="#f6ff00" /><ellipse cx="13" cy="5.5" rx="8" ry="3" fill="#2aff0a" /></Svg>,
  curve: <Svg><path d="M3 21V13C3 7 8 3 21 3" stroke="#cfd0d1" strokeWidth="1.4" strokeDasharray="4 2" /><path d="M1.500 19.500h4v4h-4zM3 5h4v4H3zM10 1.500h4v4h-4zM18.500 1h4v4h-4z" fill="#f5f5f5" stroke="#c6c7c8" /></Svg>,
  bmove: <Blob b="arrow" />,
  brot: <Blob b="rot" />,
  ruler: <Svg><path d="M1.500 1v21.500H23z" fill="#e6e1df" stroke="#cbc5c3" strokeWidth="1.2" /><path d="M6 12v6.500h6.500z" fill="#f6f6f6" stroke="#cbc5c3" /><path d="M17.500 1H23v21.500h-5.500z" fill="#ecebe3" stroke="#cfcdc4" /><path d="M20 4h3M20 8h3M20 12h3M20 16h3" stroke="#c5c3ba" /></Svg>,
  bscale: <Blob b="both" />,
  simp: <Svg><circle cx="8" cy="8" r="7" fill="#dfe2df" stroke="#c6c8c6" /><path d="M12 10h8l3.500 6.500L20 23h-8l-3.500-6.500z" fill="#e2e4e2" stroke="#c4c6c4" /><path d="M8 8l7 7M15 11v4h-4" stroke="#b9bbb9" strokeWidth="1.3" /></Svg>,
  ring: <Blob b="star" x={<path d="M6 6c3-3 6-1 9-1" stroke="#fff" strokeWidth="3" />} />,
  part: <Blob b="star" x={<path d="M2 23c-2-4 2-8 9-9-1 5-3 9-9 9z" fill="#dfe2df" stroke="#c4c6c4" />} />,
  fillring: <Blob b="star" x={<ellipse cx="9" cy="6.5" rx="5" ry="2.7" fill="#d3d6d3" stroke="#c0c2c0" />} />,
  delring: <Blob b="x" x={<path d="M6 6c3-3 6-1 9-1" stroke="#fff" strokeWidth="3" />} />,
  delpart: <Blob b="x" x={<path d="M2 23c-2-4 2-8 9-9-1 5-3 9-9 9z" fill="#dfe2df" stroke="#c4c6c4" />} />,
  reshape: <Blob x={<path d="M2 7c0 6 0 12 3 15 4-1 2-7 6-12z" fill="#dfe0dc" stroke="#c4c6c0" />} />,
  offset: <Svg><g transform="rotate(-42 12 12)"><rect x="-1" y="6" width="26" height="12" rx="6" fill="#e4e5df" stroke="#c8c9c0" strokeWidth="1.2" /><rect x="2.5" y="9" width="19" height="6" rx="3" fill="#eceee8" stroke="#c8c9c0" /></g></Svg>,
  split: <Svg><path d="M4 4l5 12L14 5h6" stroke="#cbcccd" strokeWidth="1.3" /><path d="M1.500 1.500h4v4h-4zM7 14h4v4H7zM12 3h4v4h-4zM19 3h4v4h-4z" fill="#f4f4f4" stroke="#c5c6c7" /><Badge t="rot" off /></Svg>,
  merge: <Svg><path d="M0 12h23M11 1v22M14.500 8v15M11 8h3" stroke="#c9cacb" strokeWidth="1.2" /><path d="M9 10h4v4H9zM13 10h4v4h-4z" fill="#f4f4f4" stroke="#c0c1c2" /><g transform="translate(3.5 -12.5) scale(.85)"><Badge off /></g><g transform="translate(-13 3.5) scale(.85)"><Badge t="x" off /></g></Svg>,
  trim: <Svg><path d="M8 2C2 4 1 10 5 12s10-2 12-10zM10 12l4 9M14 10l2 12" fill="#dfe2df" stroke="#c4c6c4" strokeWidth="1.2" /></Svg>,
  tri: <Svg><path d="M12 3l-6 10h14z" stroke="#d2d3d3" strokeWidth="2" /><Badge off /></Svg>,
  ell: <Svg><ellipse cx="11" cy="9" rx="10" ry="6.5" transform="rotate(-20 11 9)" fill="#e8eaea" stroke="#cfd1d1" strokeWidth="1.8" /><circle cx="10" cy="9" r="2.5" fill="#fff" stroke="#c6c8c8" strokeWidth="1.5" /><Badge off /></Svg>,
  rct: <Svg><rect x="2.5" y="3" width="17" height="13" fill="#eceded" stroke="#cfd1d1" strokeWidth="2" /><rect x="8" y="7" width="5" height="5" fill="#fff" stroke="#c6c8c8" strokeWidth="1.5" /><Badge off /></Svg>,
  pol: <Svg><path d="M8 2l10 1 2 8-6 8-8-2-4-7z" fill="#f2f3f3" stroke="#d2d3d3" strokeWidth="1.8" /><Badge off /></Svg>,
  search: <Svg><path d="M16 16l7 7" stroke="#222" strokeWidth="3.4" /><circle cx="10.5" cy="10.5" r="9" fill="#00bcd9" stroke="#1c2c33" strokeWidth="2.4" /><path d="M12.500 16c-2-3-3-4-3-6a3 3 0 0 1 6 0c0 2-1 3-3 6z" fill="#123" /><circle cx="12.5" cy="9.8" r="1.2" fill="#00bcd9" /></Svg>,
  plot: <Svg><path d="M3 2v19M1.500 20.500H23" stroke="#8a8a8a" strokeWidth="1.5" /><path d="M.5 4L3 .5 5.500 4M20 18l3.500 2.500L20 23" stroke="#777" /><path d="M5 17c4-2 5 0 8-6s4-8 10-9" stroke="#c3249b" strokeWidth="2" /><path d="M5 18.500c6 0 8-5 12-4s4 1 6-.5" stroke="#4e9cb5" strokeWidth="1.6" /></Svg>,
};

/* ------------------------------------------------------------ toolbar pieces */

const Down = ({ c = "border-t-[#6b6e70]" }: { c?: string }) => <span className={`block h-0 w-0 border-x-[5px] border-t-[5px] border-x-transparent ${c}`} />;
const SmallDown = () => <span className="block h-0 w-0 border-x-4 border-t-[5px] border-x-transparent border-t-[#6b6e70]" />;
const Up = () => <span className="block h-0 w-0 border-x-4 border-b-[5px] border-x-transparent border-b-[#6b6e70]" />;
const Right = ({ c = "border-l-[#6b6e70]" }: { c?: string }) => <span className={`block h-0 w-0 border-y-[4.5px] border-l-[5px] border-y-transparent ${c}`} />;

const Grip = () => (
  <span className="flex w-4 shrink-0 justify-center pl-1">
    <svg width="5" height="18" viewBox="0 0 5 18">
      <path d="M.5 0v18" stroke="#b5b7b9" strokeDasharray="1 2" />
      <path d="M3.500 1v17" stroke="#b5b7b9" strokeDasharray="1 2" />
    </svg>
  </span>
);

const Bar = ({ items, children, h = "h-[39px]" }: Kids & { items: string; h?: string }) => (
  <div className={`flex shrink-0 items-center border-b border-[#b4b6b8] bg-linear-to-b from-[#fafbfc] to-[#eeeff0] ${h}`}>
    {items.split(" ").map((n, i) => {
      if (n === "g0")
        return (
          <span key={i} className="-ml-1 w-[16.5px] shrink-0">
            <Grip />
          </span>
        );
      if (n === "g") return <Grip key={i} />;
      if (n === "|") return <span key={i} className="flex w-2 shrink-0 justify-center"><i className="h-[19px] w-px bg-[#c8cacc]" /></span>;
      if (n === "v" || n === "w")
        return (
          <span key={i} className="flex w-3 shrink-0 justify-center">
            <Down c={n === "v" ? "border-t-[#6b6e70]" : "border-t-[#bbbdbe]"} />
          </span>
        );
      if (n === "gap1") return <span key={i} className="w-[215.5px] shrink-0" />;
      if (n === "gap2") return <span key={i} className="w-[218px] shrink-0" />;
      if (n === "gap3") return <span key={i} className="w-[204.5px] shrink-0" />;
      if (n === "ident")
        return (
          <span key={i} className="flex h-[31px] w-[33px] shrink-0 items-center justify-center rounded-[3px] border border-[#a9abad] bg-[#d9dadb]">
            {icons[n]}
          </span>
        );
      return (
        <span key={i} className="flex w-[33px] shrink-0 justify-center">
          {icons[n]}
        </span>
      );
    })}
    {children}
  </div>
);

const Box = ({ children, className = "" }: Kids & { className?: string }) => (
  <div className={`flex shrink-0 items-center rounded-[3px] border border-[#acaeb0] bg-linear-to-b from-[#fcfcfc] to-[#eeefef] ${className}`}>{children}</div>
);

const Field = ({ children, className = "" }: Kids & { className?: string }) => (
  <div className={`flex shrink-0 items-center rounded-[3px] border border-[#acaeb0] bg-[#fcfcfc] ${className}`}>{children}</div>
);

const Check = ({ on = false }: { on?: boolean }) => (
  <span className="flex h-3.5 w-3.5 shrink-0 items-center justify-center border border-[#b2b4b6] bg-[#fcfcfc]">
    {on && (
      <svg width="10" height="10" viewBox="0 0 10 10" fill="none">
        <path d="M1 5l2.800 3.500L8.500.8" stroke="#232629" strokeWidth="1.8" />
      </svg>
    )}
  </span>
);

const Spinner = ({ text, className = "" }: { text: string; className?: string }) => (
  <Field className={`justify-between ${className}`}>
    <span className="pl-[5px]">{text}</span>
    <span className="flex h-full w-3.5 flex-col items-center justify-center gap-[7px] border-l border-[#acaeb0]">
      <Up />
      <SmallDown />
    </span>
  </Field>
);

const DockButton = ({ close = false }: { close?: boolean }) => (
  <svg width="12" height="12" viewBox="0 0 12 12" fill="none">
    <rect x=".6" y=".6" width="10.8" height="10.8" rx="2" stroke="#6b6d6f" strokeWidth="1.1" />
    {close ? <path d="M3 3l6 6M9 3L3 9" stroke="#55585a" strokeWidth="2" /> : <path d="M2.800 5h4.400v4.200H2.800zM5 5V2.800h4.200v4.400H7.200" stroke="#6b6d6f" />}
  </svg>
);

/* --------------------------------------------------------------- header area */

const underline = (label: string) => {
  const i = label.indexOf("&");
  if (i < 0) return label;
  return (
    <>
      {label.slice(0, i)}
      <u className="underline-offset-[3px]">{label[i + 1]}</u>
      {label.slice(i + 2)}
    </>
  );
};

const menus: [string, string][] = [
  ["Pro&yecto", "w-[76px]"],
  ["&Editar", "w-[56px]"],
  ["&Ver", "w-[38px]"],
  ["&Capa", "w-[50px]"],
  ["Con&figuración", "w-[113px]"],
  ["Co&mplementos", "w-[122px]"],
  ["Vect&orial", "w-[75px]"],
  ["&Ráster", ""],
  ["Base de &datos", "w-[112.5px]"],
  ["&Web", "w-[46px]"],
  ["&Malla", "w-[54px]"],
  ["Pro&cesos", "w-[77px]"],
  ["A&yuda", "w-[60px]"],
];

const Header = () => (
  <>
    <div className="relative flex h-[31px] shrink-0 items-center justify-between bg-linear-to-b from-[#57616a] to-[#464f56] pl-1 pr-[5px]">
      <QLogo s={20} />
      <span className="absolute inset-x-0 top-[5px] text-center text-[#fcfcfc]">*modulo9-2 — QGIS</span>
      <svg width="66" height="20" viewBox="0 0 66 20" fill="none">
        <path d="M5 7.500l5 5 5-5M34 4.500l5 5.500-5 5.500-5-5.500z" stroke="#fcfcfc" strokeWidth="1.1" />
        <circle cx="57.5" cy="10" r="9" fill="#fcfcfc" />
        <path d="M53.500 6l8 8M61.500 6l-8 8" stroke="#3c444b" strokeWidth="1.1" />
      </svg>
    </div>
    <div className="flex h-[27px] shrink-0 items-stretch border-b border-[#d0d2d3] pl-2.5">
      {menus.map(([label, w]) =>
        label === "&Ráster" ? (
          <span key={label} className="-ml-[3px] mr-[10.5px] flex w-[53px] shrink-0 items-center border border-[#2f8fc4] bg-[#3daee9] pl-[3px] text-[#fcfcfc]">
            <span>{underline(label)}</span>
          </span>
        ) : (
          <span key={label} className={`flex shrink-0 items-center whitespace-pre pb-px ${w}`}>
            <span>{underline(label)}</span>
          </span>
        ),
      )}
    </div>
    <Bar items="g0 doc folder save layout layoutmgr style g hand pan zin zout zfull zsel zlayer z11 zlast znext gap1 ident table abacus gear sigma measure v tip action w text v g sel w selex w desel v selloc" />
    <Bar items="g0 addlayer geopkg shp feather chip | virt | g pencils pencil saveedit addpoly vertex w multi trash cut copy gap2 redabc | tagpin tageye tagmove tagrot tagpen g hex globeplus globezoom binoc g python earth rast info g book g topo reload g green osm g stack" />
    <Bar items="g0 curve bmove w brot ruler bscale simp ring part fillring delring delpart reshape offset split merge trim gap3 tri w ell w rct w pol w g search">
      <Box className="ml-[3px] h-[30px] w-[85px] justify-end pr-1.5">
        <Down />
      </Box>
      <Field className="ml-px h-[30px] w-[768px] pl-[3px] text-[#8f9293]">Search for...</Field>
    </Bar>
    <Bar items="g0 g plot" h="h-[38px]" />
  </>
);

/* --------------------------------------------------------------- layers dock */

const hidden = [
  "cortado_DSM_mosaico_5347",
  "cortado_HRSL_SantaFe_poblacion_5347",
  "cortado_LandCover2015-2_5347",
  "cortado_LandCover2015_5347",
  "cortado_LandCover2016-2_5347",
  "cortado_LandCover2016_5347",
  "cortado_LandCover2017-2_5347",
  "cortado_LandCover2017_5347",
  "cortado_LandCover2019-2_5347",
  "cortado_LandCover2019_5347",
  "cortado_LandCover2018_5347",
];

const Row = ({ arrow, on, icon, text, cls = "", row = "" }: { arrow?: React.ReactNode; on?: boolean; icon?: React.ReactNode; text: string; cls?: string; row?: string }) => (
  <div className={`flex h-6 items-center ${row}`}>
    <span className="flex w-[23px] justify-center pr-0.5">{arrow}</span>
    <Check on={on} />
    <span className="flex w-7 justify-center">{icon}</span>
    <span className={cls}>{text}</span>
  </div>
);

const swatches: [string, string][] = [
  ["0,0000", "bg-white"],
  ["2,8868", "bg-[#fca486]"],
  ["5,7736", "bg-[#eb362a]"],
  ["8,6603", "bg-[#67000d]"],
];

const LayersDock = () => (
  <div className="flex w-[556px] shrink-0 flex-col">
    <div className="flex h-[27px] items-center justify-between pl-1 pr-[21px]">
      <span>Capas</span>
      <DockButton />
    </div>
    <div className="mb-[3px] flex h-[26px] items-center pl-1">
      <span className="flex h-[23px] w-6 items-center justify-center rounded-[3px] border border-[#a9abad] bg-[#dcddde]">
        <Svg s={17}><path d="M2 9l9-3 4 8-8 6z" fill="#e9bd3a" /><path d="M1 12l7-3 3 6-5 6z" fill="#e0554b" /><path d="M9 8l5 6 4-3-3-6z" fill="#6c93c6" /><path d="M22 2L11 16" stroke="#e8a33a" strokeWidth="3" /></Svg>
      </span>
      <span className="flex w-[26px] justify-center"><Svg s={17}><path d="M9 3h11v12H9zM5 8v11h10M1 12v11h11" stroke="#7c7e80" strokeWidth="1.5" /><path d="M13 13V3a2 2 0 0 1 4 0v9" stroke="#44637d" strokeWidth="1.5" /><Badge t="plus" /></Svg></span>
      <span className="flex w-[25px] justify-center"><Svg s={18}><path d="M1 11c5-8 16-8 21 0-5 7-16 7-21 0z" fill="#f5f6f7" stroke="#8a8c8e" strokeWidth="1.3" /><circle cx="11.5" cy="10.5" r="4.7" fill="#5d86b4" /><circle cx="11.5" cy="10.5" r="2" fill="#1d2b3b" /><path d="M17 19h7l-3.500 4z" fill="#777" /></Svg></span>
      <span className="flex w-[25px] justify-center"><Svg s={17}><path d="M2 5h18l-7 8v9H9v-9z" fill="#5b86bd" stroke="#46699a" /><path d="M1.500 1h19v4h-19z" fill="#f1df5a" stroke="#b9a631" /><path d="M17 19h7l-3.500 4z" fill="#777" /></Svg></span>
      <span className="flex w-[25px] justify-center"><Svg s={17}><path d="M10 3C8 0 2 1 3 4.500 3.500 6.500 6 6.500 8 6.500 4 6.500 1 8 2 11c1 3.500 7 3 8.500.5" stroke="#bbb" strokeWidth="2" /><path d="M11 11h11v4h-2v8h-3v-8h-2v8h-3z" fill="#d0d2d3" /></Svg></span>
      <span className="flex w-[9px] justify-center"><Down c="border-t-[#bbbdbe]" /></span>
      <span className="ml-[3px] flex w-[25px] justify-center"><Svg s={17}><path d="M3 1v20h5M3 8h5" stroke="#888" strokeWidth="1.5" /><path d="M7 6h4v4H7zM7 18h4v4H7z" fill="#f5a033" stroke="#d07e14" /><path d="M13 2h6v11h4l-7 8-7-8h4z" fill="#5b86bd" stroke="#35598b" /></Svg></span>
      <span className="flex w-[25px] justify-center"><Svg s={17}><path d="M3 1v20h5M3 8h5" stroke="#888" strokeWidth="1.5" /><path d="M7 6h4v4H7zM7 18h4v4H7z" fill="#f5a033" stroke="#d07e14" /><path d="M13 22h6V10h4l-7-8-7 8h4z" fill="#5b86bd" stroke="#35598b" /></Svg></span>
      <span className="flex w-[25px] justify-center"><Svg s={17}><rect x="2" y="2" width="17" height="17" fill="#f2f2f2" stroke="#808284" strokeWidth="1.5" /><rect x="13" y="15" width="11" height="8" rx="2" fill="#ee4550" /><path d="M15.500 19h6" stroke="#fff" strokeWidth="2" /></Svg></span>
    </div>
    <div className="h-[697px] w-[550px] border border-[#b4b6b8] bg-[#fcfcfc]">
      <Row on text="limite_provincial_santafe" cls="font-bold" />
      <Row arrow={<Down />} on icon={<RasterIcon />} text="hrsl_menos50" cls="font-bold" />
      <div className="flex h-[22px] items-center pl-[43px]">Banda 1 (Gray)</div>
      {swatches.map(([t, c]) => (
        <div key={t} className="flex h-6 items-center pl-[43px]">
          <span className={`mr-1.5 h-4 w-4 ${c}`} />
          {t}
        </div>
      ))}
      <Row arrow={<Right />} on icon={<RasterIcon />} text="HRSL_SantaFe_poblacion_5347" cls="font-bold" />
      <Row arrow={<Right c="border-l-[#23658c]" />} icon={<RasterIcon dim />} text="dsm_menos50" cls="font-bold italic underline underline-offset-[3px] text-[#fcfcfc]" row="bg-linear-to-b from-[#4bb4ec] to-[#3daee9]" />
      {hidden.map((t) => (
        <Row key={t} arrow={<Right />} icon={<RasterIcon />} text={t} cls="font-bold italic text-[#8e8e8e]" />
      ))}
      <Row arrow={<Right />} icon={<GroupIcon />} text="JAXA DSM" />
      <Row arrow={<Right />} icon={<GroupIcon />} text="Cobertura terrestre" />
    </div>
    <div className="mt-px flex items-start">
      <span className="flex h-[31px] w-[97px] items-center justify-center rounded-b-[3px] border border-[#b9bbbc] bg-[#dcddde]">Value Tool</span>
      <span className="-ml-px flex h-[31px] w-[102px] items-center justify-center rounded-b-[3px] border border-[#b9bbbc] bg-[#dcddde]">Navegador</span>
      <span className="flex h-[33px] w-[67px] items-center justify-center rounded-b-[3px] border border-t-0 border-[#b4b6b8] bg-[#f8f9fa]">Capas</span>
      <span className="h-px w-[285px] bg-[#b4b6b8]" />
    </div>
  </div>
);

/* ---------------------------------------------------------------- style dock */

const Slider = ({ label, value, pos }: { label: string; value: string; pos: number }) => (
  <div className="flex h-9 items-center pl-[11px]">
    <span className="w-[123px]">{label}</span>
    <span className="relative -mt-0.5 block h-[5px] w-[251px] rounded-[2px] border border-[#acaeb0] bg-[#d6d8d9]">
      <i className="absolute -left-px -top-px block h-[5px] rounded-l-[2px] border border-[#2c86b8] bg-[#54bcf2]" style={{ width: pos }} />
      <i className="absolute -top-[5px] block h-[13px] w-3 rounded-[3px] border border-[#a4a6a8] bg-[#fcfcfc]" style={{ left: pos - 6 }} />
    </span>
    <Spinner text={value} className="ml-[7px] h-7 w-[95px]" />
  </div>
);

const sideIcons = [
  <Svg s={24}><path d="M1 8l8-5 9 12-9 8z" fill="#c8dfa0" /><path d="M3 5l5-2 3 8-8 2z" fill="#9fd0f5" /><path d="M1 12l7 0 2 9-4 2z" fill="#f08f8f" /><path d="M8 12l6-4 4 5-2 6-5 3z" fill="#c6b58e" stroke="#a59570" /><path d="M15 10l7-9" stroke="#b3a278" strokeWidth="3" /></Svg>,
  <Svg s={24}><path d="M1 1h22v17H1z" fill="#dfe5ec" stroke="#eee" /><path d="M3 2h19v15H3z" fill="#9fb4d2" /><path d="M3 2h8l-8 9z" fill="#6788b8" /><path d="M9 5l6-1 6 2-2 5-4 1-3-3zM16 12l3 0-1 4z" fill="#c9d3de" /><path d="M1 19h22v3H1z" fill="#333" stroke="#ddd" /></Svg>,
  <Svg s={24}><path d="M1 4h22v15H1z" fill="#e3e9ee" stroke="#c8cdd1" /><path d="M3 4v15" stroke="#8b9094" /><path d="M5 8l4 5 3-2 4 4 3-3 3 3" stroke="#5c86b4" strokeWidth="1.2" /></Svg>,
  <Svg s={24}><path d="M12 5v14M4 16V7h5M20 16V7h-5" stroke="#e6a13a" strokeWidth="3" /><rect x="7.5" y="1" width="9" height="7" fill="#ec5a55" stroke="#c23b37" /><rect x="0" y="16" width="10" height="7" fill="#f7db4b" stroke="#caa51e" /><rect x="14" y="16" width="10" height="7" fill="#7fb0ea" stroke="#4b7fbd" /></Svg>,
  <Svg s={24}><path d="M2 11c-1-7 4-8 7-7V0l6 6-6 5V8C7 7 6 8 6 11z" fill="#7fbf8a" stroke="#4e9a5c" /><path d="M22 16c0 6-6 8-11 6v-3c3 1 6 1 5-2l-2 0v3l-6-5 6-6v4c5-1 8 0 8 3z" fill="#e8722f" stroke="#c0561b" /></Svg>,
];

const BandRow = ({ label, children }: Kids & { label: string }) => (
  <div className="flex h-9 items-center">
    <span className="w-[117px]">{label}</span>
    {children}
  </div>
);

const StyleDock = () => (
  <div className="flex min-w-0 flex-1 flex-col">
    <div className="flex h-[29px] items-center justify-between pb-0.5 pl-2.5 pr-0.5">
      <span>Estilo de capas</span>
      <span className="flex gap-0.5">
        <DockButton />
        <DockButton close />
      </span>
    </div>
    <Box className="ml-[9px] h-[30px] w-[555px] justify-between px-[7px]">
      <span className="flex items-center gap-[5px]"><RasterIcon />dsm_menos50</span>
      <Down />
    </Box>
    <div className="flex h-[692px] pl-[9px]">
      <div className="flex w-[38px] shrink-0 flex-col">
        <div className="flex h-[38px] items-center pl-[5px] pt-2.5">{sideIcons[0]}</div>
        <div className="flex flex-1 flex-col gap-2 bg-[#5c5c5c] pl-[3px] pt-[5px]">{sideIcons.slice(1).map((n, i) => <span key={i}>{n}</span>)}</div>
      </div>
      <div className="flex min-w-0 flex-1 flex-col pl-[3px]">
        <div className="flex h-[655px]">
          <div className="flex w-[500px] shrink-0 flex-col overflow-hidden pt-1.5">
            <Box className="h-[30px] w-full justify-between pl-[7px] pr-[5px]">
              <span className="flex items-center gap-[5px]">
                <svg width="13" height="16" viewBox="0 0 13 16">
                  <path d="M0 1h4v4H0z" fill="#1583d8" stroke="#124" />
                  <path d="M0 6.500h4v4H0z" fill="#1c8a3e" stroke="#121" />
                  <path d="M0 12h4v4H0z" fill="#8c1616" stroke="#211" />
                  <path d="M6 3h7M7 8.500h2M6 14h7" stroke="#999" />
                </svg>
                Valores en paleta/únicos
              </span>
              <Down />
            </Box>
            <div className="mt-[3px]">
              <BandRow label="Banda">
                <Box className="h-[30px] w-[383px] justify-between pl-1 pr-[5px]">Banda 1 (Gray)<Down /></Box>
              </BandRow>
              <BandRow label="Rampa de color">
                <Box className="h-[30px] w-[371px] justify-center">Random colors</Box>
                <Box className="h-[30px] w-3 justify-center overflow-hidden"><SmallDown /></Box>
              </BandRow>
            </div>
            <div className="mt-[3px] h-[280px] w-full shrink-0 border border-[#acaeb0] bg-[#fcfcfc]">
              <div className="flex h-[26px] items-stretch border-b border-[#acaeb0] bg-linear-to-b from-[#fafbfc] to-[#eeeff0]">
                <span className="flex w-[100px] items-center border-r border-[#c6c8ca] pl-0.5">Valor</span>
                <span className="flex w-[59px] items-center border-r border-[#c6c8ca] pl-0.5">Color</span>
                <span className="flex items-center pl-0.5">Etiqueta</span>
              </div>
              {[["0", "bg-black"], ["1", "bg-white"]].map(([v, c]) => (
                <div key={v} className="flex h-[38px] items-center">
                  <span className="w-[111px] pl-[23px]">{v}</span>
                  <span className={`h-9 w-9 rounded-[5px] ${c}`} />
                  <span className="pl-[15px]">{v}</span>
                </div>
              ))}
            </div>
            <div className="mt-1.5 flex shrink-0 justify-between">
              <Box className="h-[30px] w-[196px] justify-center">Clasificar</Box>
              <Box className="h-[30px] w-7 justify-center"><svg width="14" height="14" viewBox="0 0 14 14" fill="none"><path d="M5 .7h4V5h4.300v4H9v4.300H5V9H.7V5H5z" fill="#fff" stroke="#3c7d46" strokeWidth="1.2" /><path d="M7 2.500v9M2.500 7h9" stroke="#3c7d46" strokeWidth="1.5" /></svg></Box>
              <Box className="h-[30px] w-7 justify-center"><svg width="14" height="6" viewBox="0 0 14 6" fill="none"><path d="M.6.6h12.800v4.800H.6z" fill="#fff" stroke="#e8343c" strokeWidth="1.2" /><path d="M2.500 3h9" stroke="#e8343c" strokeWidth="2" /></svg></Box>
              <Box className="h-[30px] w-[196px] justify-center">Borrar todo</Box>
              <Box className="h-[30px] w-7 items-end justify-end gap-px pb-1 pr-px leading-[18px]">...<i className="block h-0 w-0 border-x-[3px] border-t-4 border-x-transparent border-t-[#6b6e70]" /></Box>
            </div>
            <div className="mt-[9px] pl-0.5 font-bold">Representación de capas</div>
            <div className="mt-[3px] h-[230px] w-full shrink-0 rounded-[2px] border border-[#d3d5d6] bg-[#ebedee] pt-[7px]">
              <div className="flex h-9 items-center pb-px pl-[11px]">
                <span className="w-[122px]">Modo de mezcla</span>
                <Box className="h-[30px] w-[353px] justify-between pl-1 pr-1.5">Normal<Down /></Box>
              </div>
              <Slider label="Brillo" value="0" pos={125} />
              <Slider label="Saturación" value="0" pos={125} />
              <Slider label="Contraste" value="0" pos={125} />
              <Slider label="Gamma" value="1,00" pos={28} />
              <Box className="ml-[133px] mt-[3px] h-[30px] w-[353px]" />
            </div>
          </div>
          <div className="mt-1.5 flex w-3.5 flex-col border-l border-[#b4b6b8] bg-[#e2e4e5]">
            <span className="flex h-[13px] items-center justify-center bg-[#f8f8f8]"><Up /></span>
            <span className="h-[412px] border-y border-[#b4b6b8] bg-[#f8f9f9]" />
            <span className="mt-auto flex h-3.5 items-center justify-center border-t border-[#b4b6b8] bg-[#f8f8f8]"><SmallDown /></span>
          </div>
        </div>
        <div className="flex h-[37px] items-center pr-[3px] pt-1.5">
          <Box className="mb-px h-6 w-6 justify-center"><Svg s={15}><path d="M1 9l9-8v5c8-1 13 3 12 9-1 5-4 8-9 8v-5c4 0 5-2 4-4-1-1-3-2-7-2v5z" fill="#e8813a" /></Svg></Box>
          <Box className="mb-px ml-1.5 h-6 w-6 justify-center"><Svg s={15}><path d="M23 9l-9-8v5C6 5 1 9 2 15c1 5 4 8 9 8v-5c-4 0-5-2-4-4 1-1 3-2 7-2v5z" fill="#6fb184" /></Svg></Box>
          <span className="ml-auto mr-[5px]"><Check on /></span>
          <span className="mr-[13px]">Actualización en vivo</span>
          <Box className="h-[30px] w-20 justify-center"><Svg s={16}><path d="M1 13l5-3 3 5C12 9 16 4 22 0c-4 7-8 14-11 23H8z" fill="#5e8a4b" stroke="#3f6531" /></Svg><span>{underline("&Aplicar")}</span></Box>
        </div>
      </div>
    </div>
    <div className="mt-[3px] flex items-start whitespace-nowrap pl-1.5">
      <span className="flex h-[31px] w-[57px] shrink-0 items-center justify-center rounded-b-[3px] border border-[#b9bbbc] bg-[#dcddde]">Da...</span>
      <span className="-ml-px flex h-[31px] w-[197px] shrink-0 items-center justify-center border border-[#b9bbbc] bg-[#dcddde]">Resultados de la identi...</span>
      <span className="flex h-[33px] w-[87px] shrink-0 items-center justify-center rounded-b-[3px] border border-t-0 border-[#b4b6b8] bg-[#f8f9fa]">Estilo d...</span>
      <span className="-ml-px flex h-[31px] w-[223px] shrink-0 items-center justify-center border border-[#b9bbbc] bg-[#dcddde] pr-[3px]">Caja de herramientas de P...</span>
    </div>
  </div>
);

/* ---------------------------------------------------------------- status bar */

const StatusBar = () => (
  <div className="flex h-9 shrink-0 items-center pl-1 text-[12.7px]">
    <Field className="h-[30px] w-[358px] pl-2 text-[15px] text-[#8f9293]">
      <svg width="13" height="14" viewBox="0 0 13 14" fill="none" className="mr-[7px]"><circle cx="5.5" cy="5.5" r="4.8" stroke="#7c7f81" strokeWidth="1.2" /><path d="M9 9l3.500 4" stroke="#7c7f81" strokeWidth="1.2" /></svg>
      Escriba para localizar (Ctrl+K)
    </Field>
    <span className="ml-[590px] w-[73.5px]">Coordenada</span>
    <Field className="h-[26px] w-[117px] pl-[5px]">5416064,6381214</Field>
    <span className="flex w-[23px] justify-center"><Svg s={17}><g transform="rotate(-40 12 12)" stroke="#333" strokeWidth="1.6"><rect x="4" y="1" width="7" height="15" rx="3.5" fill="#ddd" /><rect x="13" y="4" width="7" height="17" rx="3.5" fill="#ddd" /><path d="M7.500 3v11M16.500 6v13M4 9h7M13 12h7" /></g><path d="M14 1l8 6" stroke="#333" strokeWidth="1.6" /></Svg></span>
    <span className="ml-[9px] w-[39px]">Escala</span>
    <Field className="h-[30px] w-[103px] justify-between pl-[3px]">1:225127<span className="flex h-full w-[19px] items-center justify-center border-l border-[#acaeb0]"><Down /></span></Field>
    <span className="ml-[9px] flex w-[18px] justify-center"><Svg s={17}><path d="M7 11V7a5 5 0 0 1 10 0v4" stroke="#777" strokeWidth="2.5" /><rect x="3" y="10" width="18" height="13" rx="2" fill="#666" /></Svg></span>
    <span className="ml-1.5 w-[76px]">Amplificador</span>
    <Spinner text="100%" className="h-[30px] w-[98px]" />
    <span className="ml-[9px] w-[59px]">Rotación</span>
    <Spinner text="0,0 º" className="h-[30px] w-[94px]" />
    <span className="ml-1.5"><Check on /></span>
    <span className="ml-1 w-[86px]">Representar</span>
    <span className="-ml-1 mr-0.5"><Svg s={16}><circle cx="12" cy="12" r="11" fill="#8b8e90" /><path d="M1 8h22M1 16h22M12 1v22M6 2c-3 7-3 13 0 20M18 2c3 7 3 13 0 20" stroke="#e2e3e4" strokeWidth="1.2" /></Svg></span>
    <span className="w-[82px]">EPSG:5347</span>
    <Svg s={17}><path d="M12 2C5 2 1 6 1 11s4 8 8 8.500h3l5 4-1-5c4-1 7-4 7-8 0-5-4-8.500-11-8.500z" fill="#565b5f" /><g fill="#fff"><circle cx="7" cy="11" r="1.6" /><circle cx="12" cy="11" r="1.6" /><circle cx="17" cy="11" r="1.6" /></g></Svg>
  </div>
);

/* ------------------------------------------------------------------- taskbar */

const Folder = () => (
  <Svg s={32}><path d="M1 1.500h8l2 2h11v8H1z" fill="#1c6fb5" /><path d="M4 5h17v7H4z" fill="#f6f8fa" /><path d="M1 9h8l2-1.500h12V22H1z" fill="#3d9be9" /></Svg>
);
const Chrome = () => (
  <Svg s={32}><circle cx="12" cy="12" r="11" fill="#fbc116" /><path d="M2.500 6.500A11 11 0 0 1 21.500 6.500H12L7.200 14.700z" fill="#e33b2e" /><path d="M2.500 6.500a11 11 0 0 0 8.300 16.400L16 14.500l-8.800.2z" fill="#269a44" /><circle cx="12" cy="12" r="5.3" fill="#fff" /><circle cx="12" cy="12" r="4.2" fill="#3f7fe8" /></Svg>
);
const Gwen = () => (
  <Svg s={28}><circle cx="12" cy="12" r="11.5" fill="#d84a86" /><circle cx="12" cy="12" r="8" fill="#e9e4e8" /><path d="M8 7l4-2 5 4 1 5-4 4-5-5z" fill="#fff" /></Svg>
);

const discord = "M19.500 5.500C18 4.800 16.500 4.400 15 4.200l-.6 1.200a15 15 0 0 0-4.800 0L9 4.200c-1.500.2-3 .6-4.500 1.300C1.700 9.700.9 13.800 1.300 17.900 3 19.200 4.900 20 6.700 20.600l1.300-2-1.900-1c4 1.900 8 1.900 11.900 0l-1.900 1 1.300 2c1.800-.6 3.700-1.400 5.400-2.700.5-4.800-.8-8.900-3.300-12.400zM8.500 15.300c-1.200 0-2.100-1.100-2.100-2.400s.9-2.400 2.100-2.400 2.200 1.100 2.100 2.400c0 1.300-.9 2.400-2.100 2.400zm7 0c-1.200 0-2.100-1.100-2.100-2.400s.9-2.400 2.100-2.400 2.200 1.100 2.100 2.400c0 1.300-.9 2.400-2.100 2.400z";

const Task = ({ icon, text, tone = "normal", gap = "gap-1.5" }: { icon: React.ReactNode; text: string; tone?: string; gap?: string }) => {
  const look = tone === "plain" ? "border-transparent bg-[#3c4043]" : tone === "on" ? "border-[#3f93c4] bg-[#34617e]" : "border-[#65696c] bg-[#4b4f52]";
  return (
    <div className={`flex w-[177px] shrink-0 items-center overflow-hidden whitespace-nowrap border-t-[3px] pb-[3px] pl-[3px] text-[#eff0f1] ${gap} ${look}`}>
      <span className="flex w-8 shrink-0 justify-center">{icon}</span>
      {text}
    </div>
  );
};

const Taskbar = () => (
  <div className="flex h-11 shrink-0 items-stretch bg-linear-to-b from-[#2b3034] to-[#33383c] py-0.5">
    <div className="flex w-[330px] shrink-0 items-center pl-2">
      <span className="w-[43px]"><Svg s={28}><circle cx="12" cy="12" r="11.8" fill="#fcfcfc" /><circle cx="12" cy="12" r="6.5" stroke="#2b3034" strokeWidth="1.5" strokeDasharray="2 1.4" /><circle cx="12" cy="12" r="5" fill="#fcfcfc" /><path d="M12 4v3M12 17v3M4 12h3M6.300 6.300l2 2M6.300 17.700l2-2M17.700 17.700l-2-2" stroke="#2b3034" strokeWidth="2.2" /></Svg></span>
      <span className="w-12"><Firefox /></span>
      <span className="flex h-7 w-7 items-center justify-center bg-[#414f4e]"><svg width="9" height="14" viewBox="0 0 9 14" fill="none"><path d="M1 1l5.500 6L1 13" stroke="#b0bdbc" /></svg></span>
      <span className="ml-3.5"><Svg s={28}><circle cx="12" cy="12" r="11.5" fill="#2ca5e0" /><path d="M4.500 12L18.500 6 16 18.500l-4-3-2 2-.5-3.500z" fill="#fff" /></Svg></span>
      <span className="ml-[15px] flex h-7 w-[26px] items-center justify-center rounded bg-[#6c83cf]"><Svg s={20}><path d={discord} fill="#fff" /></Svg></span>
      <span className="ml-[13px]"><Svg s={29}><rect x=".5" y="2" width="23" height="16" fill="#4dc0b8" /><path d="M12 10L23.500 2v16H19z" fill="#bd4a8c" /><rect x="6" y="7" width="11" height="7.5" rx="1" fill="#eef3f3" /><circle cx="11.5" cy="10.8" r="2.5" fill="#c33f58" /><path d="M8 21.500h8" stroke="#ddd" strokeWidth="1.5" /></Svg></span>
      <span className="flex h-7 w-[26px] items-center justify-center rounded bg-[#3c4547]"><svg width="12" height="18" viewBox="0 0 14 20"><path d="M13 1v5L5 8.500l8 2.500v5L1 19.500v-5l7.500-2.500L1 9.500v-5z" fill="#ff9800" /></svg></span>
      <span className="ml-[15px]"><Svg s={28}><path d="M17.500 0L24 3v18l-6.500 3L7 14.500l-4.500 3.500L0 16.500 4.500 12 0 7.500 2.500 6 7 9.500zM18 7l-6.500 5 6.500 5z" fill="#2a8fd8" /></Svg></span>
    </div>
    <Task icon={<Firefox />} text="GIS-curriculum/fi..." tone="plain" gap="gap-2" />
    <Task icon={<Folder />} text="media — Dolphin" gap="gap-2" />
    <Task icon={<Chrome />} text="AR_ESPAÑOL - M..." gap="gap-1.5" />
    <Task icon={<Firefox />} text="WhatsApp - Mozil..." gap="gap-1" />
    <Task icon={<QLogo s={32} />} text="*modulo9-2 — Q..." tone="on" gap="gap-1" />
    <Task icon={<Gwen />} text="fig930.png - 1316..." gap="gap-1" />
    <div className="ml-[60px] flex w-5 flex-col items-center justify-center gap-1.5">
      <Svg s={13}><rect x="4" y="11" width="16" height="12" stroke="#ddd" strokeWidth="1.6" /><path d="M8 11V5a4 4 0 0 1 8 0v6" stroke="#ddd" strokeWidth="1.6" /></Svg>
      <Svg s={13}><path d="M7 5a9 9 0 1 0 10 0M12 1v11" stroke="#ddd" strokeWidth="1.6" /></Svg>
    </div>
    <div className="ml-[7px] flex items-center">
      {[
        <Svg s={18}><path d="M5 18V9a7 7 0 0 1 14 0v9h2M3 18h18M9 21h6M1 6l3-4M23 6l-3-4" stroke="#fcfcfc" strokeWidth="1.8" /></Svg>,
        <Svg s={18}><circle cx="12" cy="12" r="10.5" stroke="#fcfcfc" strokeWidth="1.8" /><path d="M12 19V7M7 11l5-6 5 6" stroke="#fcfcfc" strokeWidth="3" /><circle cx="20" cy="20" r="4" fill="#3daee9" /></Svg>,
        <Svg s={22}><path d={discord} fill="#fcfcfc" /><circle cx="19.5" cy="4.5" r="4" fill="#ed4245" /></Svg>,
        <Svg s={22}><circle cx="12" cy="12" r="12" fill="#7a10b8" /><path d="M12 3c1 4 5 4 4 10-1 5-4 7-4 7s-5-2-5-7c0-4 3-4 3-8z" fill="#f0453d" /><path d="M9 20c-3-5 4-6 5-12 3 5 0 9-5 12z" fill="#fbc740" /></Svg>,
        <Svg s={17}><path d="M1 13L23 1l-4 21-7-5-3 5v-6z" fill="#fcfcfc" /></Svg>,
        <Svg s={18}><path d="M4 4h16v19H4z" stroke="#fcfcfc" strokeWidth="2" /><path d="M8 1h8v5H8z" fill="#fcfcfc" /><path d="M7 11h10M7 15h10M7 19h5" stroke="#fcfcfc" strokeWidth="1.6" /></Svg>,
        <Svg s={20}><path d="M2 5h18v14H2zM20 9h3v6h-3" stroke="#fcfcfc" strokeWidth="1.8" /><path d="M5 8h12v8H5z" fill="#27ae8b" /><path d="M13 9l-4 3 4 3" fill="#fff" /></Svg>,
        <Svg s={18}><path d="M5 7l13 10-6 5.500v-21L18 7 5 17" stroke="#fcfcfc" strokeWidth="1.7" /></Svg>,
        <Svg s={18}><path d="M8 1h8v8H8z" stroke="#fcfcfc" strokeWidth="1.8" /><path d="M6 9h12v14H6z" fill="#fcfcfc" /><path d="M9 14h6M9 18h6" stroke="#333" strokeWidth="1.5" /></Svg>,
        <Svg s={20}><path d="M1 9c6-6.500 16-6.500 22 0M4.500 13c4-4.500 11-4.500 15 0" stroke="#9da0a2" strokeWidth="1.8" /><path d="M8 16.500c2-2.500 6-2.500 8 0" stroke="#fcfcfc" strokeWidth="1.8" /><circle cx="12" cy="20" r="2" fill="#fcfcfc" /></Svg>,
        <Svg s={19}><path d="M2 8h4l6-6v20l-6-6H2z" fill="#fcfcfc" /><path d="M15 7c3 3 3 7 0 10M18 3c5 5 5 13 0 18" stroke="#fcfcfc" strokeWidth="1.7" /></Svg>,
        <span className="block h-0 w-0 border-x-[6px] border-b-[7px] border-x-transparent border-b-[#fcfcfc]" />,
      ].map((n, i) => (
        <span key={i} className="flex w-7 justify-center">{n}</span>
      ))}
    </div>
    <div className="ml-px flex w-[58px] flex-col items-center justify-center pb-px text-[#fcfcfc]">
      <span className="text-[21px] leading-[22px]">14:49</span>
      <span className="pr-1 text-[16px] leading-[18px]">1/4/21</span>
    </div>
    <div className="ml-3 mt-2 flex h-6 w-6 items-end justify-center border border-[#fcfcfc] pb-[3px]"><i className="h-px w-4 bg-[#fcfcfc]" /></div>
  </div>
);

/* --------------------------------------------------------------------- menus */

const MenuItem = ({ icon, text, sub = false, on = false }: { icon?: React.ReactNode; text: string; sub?: boolean; on?: boolean }) => (
  <div className={`flex h-[30px] shrink-0 items-center ${on ? "border-y border-[#53b7eb] bg-[#3daee9] text-[#fcfcfc]" : ""}`}>
    <span className="flex w-[29px] justify-start pl-[7px]">{icon}</span>
    <span>{underline(text)}</span>
    {sub && <span className="ml-auto mr-1.5"><Right c={on ? "border-l-[#c9e7f8]" : "border-l-[#6b6e70]"} /></span>}
  </div>
);

const RasterMenu = () => (
  <div className="absolute left-[537px] top-[58px] h-[272px] w-[239px] border border-b-0 border-[#8f9294] bg-white">
    <div className="-mt-px flex flex-col">
      <MenuItem text="Calculadora ráster..." icon={<Svg s={16}><path d="M0 0h12v12H0z" fill="#33475f" /><path d="M4 0h4v4H4zM0 4h4v4H0z" fill="#9fb6cf" /><rect x="7" y="4" width="16" height="19" fill="#eee" stroke="#777" /><path d="M9 9h4M16 9h5" stroke="#d33" strokeWidth="3" /><path d="M9 14h12M9 19h12" stroke="#8a9" strokeWidth="2.5" strokeDasharray="3 2" /></Svg>} />
      <MenuItem text="Alinear rásters..." />
      <MenuItem text="Georreferenciador..." icon={<Svg s={16}><path d="M7 0v24M17 0v24M0 7h24M0 17h24" stroke="#4a5c6b" strokeWidth="1.4" /><path d="M4 2l3 8-2 12M14 4l8 4-4 8 4 6" stroke="#9eb3c3" /></Svg>} />
      <i className="mx-1 block h-0.5 shrink-0 border-t border-[#bcbebf]" />
      <MenuItem text="&Table to style" sub />
      <MenuItem text="Análisis" sub />
      <MenuItem text="Proyecciones" sub />
      <MenuItem text="Miscelánea" sub />
      <MenuItem text="Extracción" sub />
      <MenuItem text="Conversión" sub on />
    </div>
  </div>
);

const PctIcon = ({ flip = false }: { flip?: boolean }) => (
  <svg width="16" height="16" viewBox="0 0 16 16">
    <defs>
      <linearGradient id="spectrum"><stop stopColor="#e22" /><stop offset=".5" stopColor="#2b2" /><stop offset="1" stopColor="#22e" /></linearGradient>
      <linearGradient id="fr"><stop stopColor="#f33" /><stop offset="1" stopColor="#fff" /></linearGradient>
      <linearGradient id="fg"><stop stopColor="#5e5" /><stop offset="1" stopColor="#fff" /></linearGradient>
      <linearGradient id="fb"><stop stopColor="#44f" /><stop offset="1" stopColor="#fff" /></linearGradient>
    </defs>
    <rect y={flip ? 13.7 : 0} width="16" height="2.3" fill="url(#spectrum)" />
    <path d="M7 3h2v2h2L8 8.500 5 5h2z" fill="#4d6a85" transform={flip ? "translate(0 5)" : undefined} />
    <rect y={flip ? 0 : 8.5} width="13" height="2" fill="url(#fr)" />
    <rect y={flip ? 2.7 : 11.2} width="13" height="2" fill="url(#fg)" />
    <rect y={flip ? 5.4 : 14} width="13" height="2" fill="url(#fb)" />
  </svg>
);

const ConversionMenu = () => (
  <div className="absolute left-[775px] top-[300px] h-[150px] w-[319px] border border-[#8f9294] bg-white">
    <div className="-mt-px flex flex-col">
      <MenuItem text="PCT a RGB..." icon={<PctIcon />} />
      <MenuItem on text="Poligonizar (ráster a vectorial)..." icon={<svg width="16" height="16" viewBox="0 0 16 16"><path d="M0 0h16v16H0z" fill="#6fa9cc" /><path d="M0 3.500h16M0 7.500h16M0 11.500h16M3.500 0v16M7.500 0v16M11.500 0v16" stroke="#c9e4f3" /><path d="M0 5c3-4 5-1 8-2s6-1 8 1v7c-3 3-5 0-8 1s-6 1-8-2z" fill="#a99aa4" stroke="#866f7c" /></svg>} />
      <MenuItem text="Rasterizar (vectorial a ráster)..." icon={<svg width="16" height="16" viewBox="0 0 16 16" fill="none"><path d="M0 2.500l8 2 6 5-6 4" stroke="#4f8260" strokeWidth="2" /><path d="M7 4h4v3H7zM12 8h4v4h-4zM8 12h3v3H8z" fill="#9fc2a6" opacity=".7" /></svg>} />
      <MenuItem text="RBG a PCT..." icon={<PctIcon flip />} />
      <MenuItem text="Traducir (convertir formato)..." icon={<svg width="16" height="16" viewBox="0 0 16 16"><path d="M5 0h9v7H5z" fill="#51708c" /><path d="M8 0h3v3H8zM5 4h2v2H5z" fill="#b9cbdc" /><path d="M9 7h6v9H9z" fill="#e8eef3" stroke="#44617c" strokeWidth="1.3" /><path d="M7 7v5h4" stroke="#44617c" strokeWidth="1.5" fill="none" /></svg>} />
    </div>
  </div>
);

export default function App() {
  return (
    <div className="relative flex h-[1080px] w-[1920px] flex-col overflow-hidden bg-[#eff0f1] font-['Noto_Sans',sans-serif] text-[15px] leading-5 text-[#232629]">
      <Header />
      <div className="flex h-[786px] shrink-0">
        <LayersDock />
        <div className="mt-px h-[785px] w-[797px] shrink-0 overflow-hidden border border-[#b4b6b8] bg-white">
          <MapCanvas />
        </div>
        <StyleDock />
      </div>
      <div className="h-px shrink-0" />
      <StatusBar />
      <Taskbar />
      <RasterMenu />
      <ConversionMenu />
      <svg width="14" height="20" viewBox="0 0 14 20" className="absolute left-[1059px] top-[341px]">
        <path d="M1 1v15l3.500-3.300L7 18.500l2.600-1.200L7.200 12H12z" fill="#111" stroke="#fff" strokeWidth="1.1" />
      </svg>
    </div>
  );
}
